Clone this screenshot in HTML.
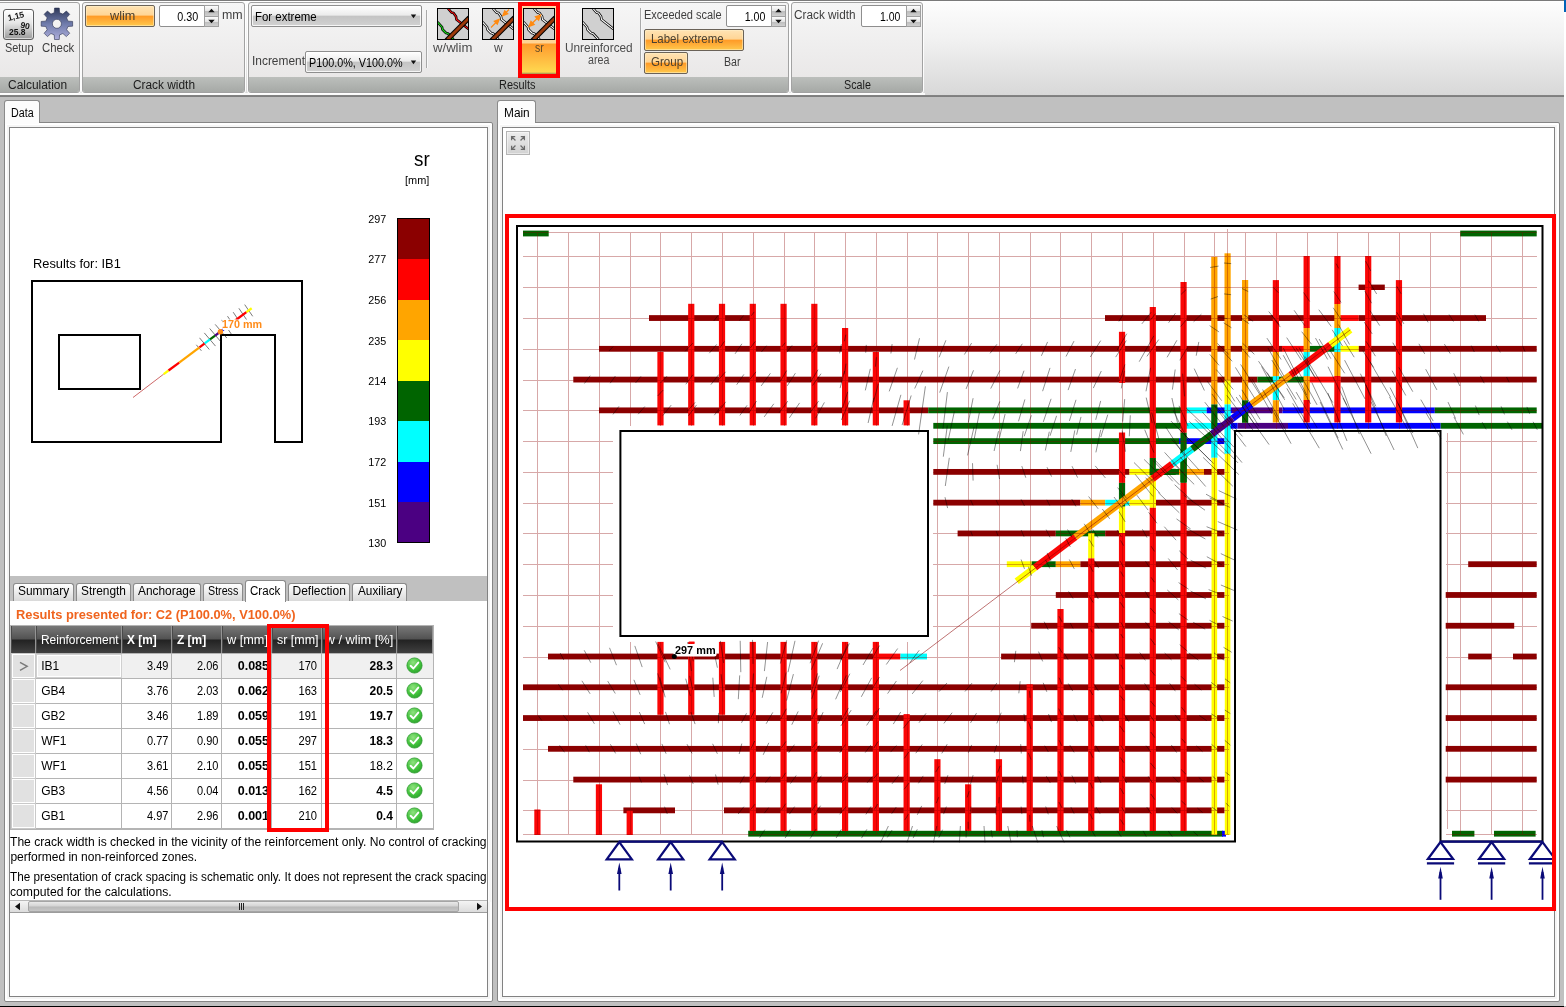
<!DOCTYPE html>
<html lang="en"><head><meta charset="utf-8"><title>Crack spacing sr</title>
<style>
html,body{margin:0;padding:0;background:#c0c0c0;}
body{width:1566px;height:1007px;overflow:hidden;font-family:"Liberation Sans",sans-serif;font-size:12px;}
#app{position:relative;width:1566px;height:1007px;overflow:hidden;background:#c0c0c0;will-change:transform;}
#app div{position:absolute;box-sizing:border-box;}
#app svg{position:absolute;overflow:visible;}
.t{position:absolute;white-space:nowrap;line-height:1;}
.grp{border:1px solid #a2a2a2;border-radius:3px;background:linear-gradient(#f6f6f6,#e7e5e5);box-shadow:0 0 0 1px rgba(255,255,255,.9);overflow:hidden;}
.grp .lab{left:0;right:0;bottom:0;height:15px;background:linear-gradient(#bcbfbc,#a6a9a6);}
.obtn{border:1px solid #6a6258;border-radius:2px;background:linear-gradient(#ffe3b4 0,#ffd595 46%,#ff9a26 50%,#ffb03a 75%,#ffc94c 100%);box-shadow:inset 0 0 0 1px rgba(255,240,200,.55);}
.combo{border:1px solid #8e8e8e;border-radius:2px;background:linear-gradient(#ffffff 0,#ececec 45%,#c4c4c4 52%,#d2d2d2 100%);box-shadow:inset 0 0 0 1px rgba(255,255,255,.8);}
.spin{border:1px solid #8e8e8e;border-radius:2px;background:#fff;}
.spb{border:1px solid #a0a0a0;background:linear-gradient(#fdfdfd 0,#e4e4e4 50%,#bdbdbd 55%,#cfcfcf 100%);}
.pane{border:1px solid #858585;background:#fff;border-radius:2px;}
.inner{border:1px solid #828282;background:#fff;}
.tab{border:1px solid #8a8a8a;border-bottom:none;border-radius:3px 3px 0 0;background:linear-gradient(#ffffff,#d9d9d9);}
.hc{background:linear-gradient(#787878 0,#525252 48%,#222222 52%,#404040 100%);border-right:1px solid #949494;border-left:1px solid #4a4a4a;}
.rh{background:#e1e1e1;border:1px solid #fff;box-shadow:0 0 0 1px #c9c9c9;}

</style></head>
<body>
<div id="app">
<div style="left:0px;top:0px;width:1566px;height:97px;background:linear-gradient(#fdfdfd 2px,#f1f1f1 40px,#d8d8d8 95px);"></div>
<div style="left:0px;top:0px;width:1566px;height:1px;background:#7a7a7a;"></div>
<div style="left:0px;top:1px;width:1566px;height:1px;background:#ffffff;"></div>
<div style="left:0px;top:95px;width:1566px;height:2px;background:linear-gradient(#858585,#7c7c7c);"></div>
<div style="left:0px;top:93px;width:925px;height:2px;background:#fbfbfb;"></div>
<div style="left:1564px;top:0px;width:2px;height:1006px;background:#fff;"></div>
<div style="left:1564px;top:0px;width:2px;height:12px;background:#0063b7;"></div>
<div class="grp" style="left:-3px;top:2px;width:83px;height:91px;"><div class="lab"></div></div>
<div class="grp" style="left:82px;top:2px;width:163px;height:91px;"><div class="lab"></div></div>
<div class="grp" style="left:248px;top:2px;width:540.5px;height:91px;"><div class="lab"></div></div>
<div class="grp" style="left:791px;top:2px;width:132px;height:91px;"><div class="lab"></div></div>
<span class="t" id="t0" style="top:79.00px;font-size:12px;color:#1c1c1c;left:8.40px;transform-origin:0 50%;transform:scaleX(0.9954);">Calculation</span>
<span class="t" id="t1" style="top:79.00px;font-size:12px;color:#1c1c1c;left:132.50px;transform-origin:0 50%;transform:scaleX(0.9890);">Crack width</span>
<span class="t" id="t2" style="top:79.00px;font-size:12px;color:#1c1c1c;left:499.40px;transform-origin:0 50%;transform:scaleX(0.9121);">Results</span>
<span class="t" id="t3" style="top:79.00px;font-size:12px;color:#1c1c1c;left:844.30px;transform-origin:0 50%;transform:scaleX(0.8957);">Scale</span>
<div style="left:3px;top:9px;width:31px;height:31px;border:1px solid #5e5e5e;border-radius:3px;background:linear-gradient(#ffffff,#e6e6e6 45%,#9a9a9a);box-shadow:inset 0 0 0 1px rgba(255,255,255,.6);"></div>
<svg style="left:3px;top:9px" width="31" height="31" viewBox="0 0 31 31" font-family="Liberation Sans, sans-serif" font-weight="700" fill="#101010"><text x="5.5" y="12" font-size="8.5" transform="rotate(-14 5.5 12)">1,15</text><text x="17" y="18.5" font-size="8.5" transform="rotate(12 17 18.5)">90</text><text x="6" y="26.3" font-size="8.5">25.8</text></svg>
<span class="t" id="t4" style="top:42.00px;font-size:12px;color:#3e3e3e;left:4.50px;transform-origin:0 50%;transform:scaleX(0.9088);">Setup</span>
<svg style="left:40px;top:7px" width="34" height="34" viewBox="0 0 34 34"><defs><linearGradient id="gg" x1="0" y1="0" x2="0" y2="1"><stop offset="0" stop-color="#2e3858"/><stop offset=".5" stop-color="#6f7bab"/><stop offset="1" stop-color="#aeaedb"/></linearGradient></defs><path d="M14.24 5.71 L14.54 1.08 L19.26 1.08 L19.56 5.71 L22.86 7.08 L26.35 4.01 L29.69 7.35 L26.62 10.84 L27.99 14.14 L32.62 14.44 L32.62 19.16 L27.99 19.46 L26.62 22.76 L29.69 26.25 L26.35 29.59 L22.86 26.52 L19.56 27.89 L19.26 32.52 L14.54 32.52 L14.24 27.89 L10.94 26.52 L7.45 29.59 L4.11 26.25 L7.18 22.76 L5.81 19.46 L1.18 19.16 L1.18 14.44 L5.81 14.14 L7.18 10.84 L4.11 7.35 L7.45 4.01 L10.94 7.08 Z M21.4 16.8 a4.5 4.5 0 1 0 -9 0 a4.5 4.5 0 1 0 9 0 Z" fill="url(#gg)" fill-rule="evenodd" stroke="#2a3150" stroke-width=".6" stroke-linejoin="round"/></svg>
<span class="t" id="t5" style="top:42.00px;font-size:12px;color:#3e3e3e;left:41.70px;transform-origin:0 50%;transform:scaleX(0.9496);">Check</span>
<div class="obtn" style="left:85px;top:5px;width:70px;height:22px;"></div>
<span class="t" id="t6" style="top:10.00px;font-size:12px;color:#4a4030;left:109.50px;transform-origin:0 50%;transform:scaleX(1.0542);">wlim</span>
<div class="spin" style="left:159px;top:5px;width:60px;height:22px;"></div><div class="spb" style="left:204px;top:5px;width:15px;height:11.5px;"></div><div class="spb" style="left:204px;top:15.5px;width:15px;height:11.5px;"></div><svg style="left:0;top:0" width="1" height="1"><path d="M208.3 12.3 l3.2 -3.6 l3.2 3.6 Z M208.3 19.7 l3.2 3.6 l3.2 -3.6 Z" fill="#111"/></svg><span class="t" id="t7" style="top:11.00px;font-size:12px;color:#000;right:1368.00px;transform-origin:100% 50%;transform:scaleX(0.8990);">0.30</span>
<span class="t" id="t8" style="top:9.00px;font-size:12px;color:#3e3e3e;left:221.50px;transform-origin:0 50%;transform:scaleX(1.0350);">mm</span>
<div class="combo" style="left:251px;top:5px;width:171px;height:22px;"></div><svg style="left:0;top:0" width="1" height="1"><path d="M410.8 14.6 h5.4 l-2.7 3.6 Z" fill="#111"/></svg><span class="t" id="t9" style="top:11.00px;font-size:12px;color:#000;left:255.30px;transform-origin:0 50%;transform:scaleX(0.9538);">For extreme</span>
<span class="t" id="t10" style="top:55.00px;font-size:12px;color:#3e3e3e;left:251.50px;transform-origin:0 50%;transform:scaleX(0.9933);">Increment</span>
<div class="combo" style="left:305px;top:51px;width:117px;height:22px;"></div><svg style="left:0;top:0" width="1" height="1"><path d="M410.8 60.6 h5.4 l-2.7 3.6 Z" fill="#111"/></svg><span class="t" id="t11" style="top:57.00px;font-size:12px;color:#000;left:309.30px;transform-origin:0 50%;transform:scaleX(0.8984);">P100.0%, V100.0%</span>
<div style="left:426px;top:10px;width:1px;height:58px;background:#a9a9a9;"></div>
<div style="left:427px;top:10px;width:1px;height:58px;background:#f8f8f8;"></div>
<div style="left:518px;top:2px;width:42px;height:76px;background:#ff0000;"></div>
<div style="left:522px;top:6px;width:34px;height:68px;background:linear-gradient(#ffdba6 0,#ffd393 37px,#ff9a2c 38px,#ffb940 52px,#ffd84f 66px,#a08c50 68px);"></div>
<svg style="left:437px;top:8px" width="32" height="32" viewBox="0 0 32 32"><defs><clipPath id="ic437"><rect x="1" y="1" width="30" height="30"/></clipPath></defs><rect x=".5" y=".5" width="31" height="31" fill="#d0d0d0" stroke="#000" stroke-width="1"/><g clip-path="url(#ic437)"><path d="M11 .5 L14.5 4.5 L16.5 5 L19 8.5 L19.5 11.5 L22 13.5 L31.5 21" stroke="#000" stroke-width="2.6" fill="none" stroke-linejoin="round"/><path d="M11 .5 L14.5 4.5 L16.5 5 L19 8.5 L19.5 11.5 L22 13.5 L31.5 21" stroke="#ff1010" stroke-width="1.1" fill="none" stroke-linejoin="round"/><path d="M.5 14 L5 19 L5.5 21.5 L9 25 L11 25.5 L16.5 31.5" stroke="#000" stroke-width="2.6" fill="none" stroke-linejoin="round"/><path d="M.5 14 L5 19 L5.5 21.5 L9 25 L11 25.5 L16.5 31.5" stroke="#18e018" stroke-width="1.1" fill="none" stroke-linejoin="round"/><path d="M8.5 31.5 L31.5 8.5 M12.5 31.5 L31.5 12.5" stroke="#000" stroke-width="2.2" fill="none"/><path d="M10.5 31.5 L31.5 10.5" stroke="#9c3a0c" stroke-width="3" fill="none"/></g></svg>
<svg style="left:482px;top:8px" width="32" height="32" viewBox="0 0 32 32"><defs><clipPath id="ic482"><rect x="1" y="1" width="30" height="30"/></clipPath></defs><rect x=".5" y=".5" width="31" height="31" fill="#d0d0d0" stroke="#000" stroke-width="1"/><g clip-path="url(#ic482)"><path d="M11 .5 L14.5 4.5 L16.5 5 L19 8.5 L19.5 11.5 L22 13.5 L31.5 21" stroke="#000" stroke-width="2.6" fill="none" stroke-linejoin="round"/><path d="M11 .5 L14.5 4.5 L16.5 5 L19 8.5 L19.5 11.5 L22 13.5 L31.5 21" stroke="#fff" stroke-width="1.1" fill="none" stroke-linejoin="round"/><path d="M.5 14 L5 19 L5.5 21.5 L9 25 L11 25.5 L16.5 31.5" stroke="#000" stroke-width="2.6" fill="none" stroke-linejoin="round"/><path d="M.5 14 L5 19 L5.5 21.5 L9 25 L11 25.5 L16.5 31.5" stroke="#fff" stroke-width="1.1" fill="none" stroke-linejoin="round"/><path d="M9 19.5 L14 14.5 M27 1.5 L22 6.5" stroke="#ff8a10" stroke-width="1.1"/><path d="M18.3 10.2 L11.2 13 L15.5 17.3 Z M19.7 8.8 L26.8 6 L22.5 1.7 Z" fill="#ff8a10"/><path d="M8.5 31.5 L31.5 8.5 M12.5 31.5 L31.5 12.5" stroke="#000" stroke-width="2.2" fill="none"/><path d="M10.5 31.5 L31.5 10.5" stroke="#9c3a0c" stroke-width="3" fill="none"/></g></svg>
<svg style="left:523px;top:8px" width="32" height="32" viewBox="0 0 32 32"><defs><clipPath id="ic523"><rect x="1" y="1" width="30" height="30"/></clipPath></defs><rect x=".5" y=".5" width="31" height="31" fill="#d0d0d0" stroke="#000" stroke-width="1"/><g clip-path="url(#ic523)"><path d="M11 .5 L14.5 4.5 L16.5 5 L19 8.5 L19.5 11.5 L22 13.5 L31.5 21" stroke="#000" stroke-width="2.6" fill="none" stroke-linejoin="round"/><path d="M11 .5 L14.5 4.5 L16.5 5 L19 8.5 L19.5 11.5 L22 13.5 L31.5 21" stroke="#fff" stroke-width="1.1" fill="none" stroke-linejoin="round"/><path d="M.5 14 L5 19 L5.5 21.5 L9 25 L11 25.5 L16.5 31.5" stroke="#000" stroke-width="2.6" fill="none" stroke-linejoin="round"/><path d="M.5 14 L5 19 L5.5 21.5 L9 25 L11 25.5 L16.5 31.5" stroke="#fff" stroke-width="1.1" fill="none" stroke-linejoin="round"/><path d="M7 17.5 L16.5 8" stroke="#ff8a10" stroke-width="1.3"/><path d="M5 19.5 L12.3 16.8 L7.7 12.2 Z M18.6 5.9 L11.3 8.6 L15.9 13.2 Z" fill="#ff8a10"/><path d="M8.5 31.5 L31.5 8.5 M12.5 31.5 L31.5 12.5" stroke="#000" stroke-width="2.2" fill="none"/><path d="M10.5 31.5 L31.5 10.5" stroke="#9c3a0c" stroke-width="3" fill="none"/></g></svg>
<svg style="left:582px;top:8px" width="32" height="32" viewBox="0 0 32 32"><defs><clipPath id="ic582"><rect x="1" y="1" width="30" height="30"/></clipPath></defs><rect x=".5" y=".5" width="31" height="31" fill="#d0d0d0" stroke="#000" stroke-width="1"/><g clip-path="url(#ic582)"><path d="M11 .5 L14.5 4.5 L16.5 5 L19 8.5 L19.5 11.5 L22 13.5 L31.5 21" stroke="#000" stroke-width="2.6" fill="none" stroke-linejoin="round"/><path d="M11 .5 L14.5 4.5 L16.5 5 L19 8.5 L19.5 11.5 L22 13.5 L31.5 21" stroke="#fff" stroke-width="1.1" fill="none" stroke-linejoin="round"/><path d="M.5 14 L5 19 L5.5 21.5 L9 25 L11 25.5 L16.5 31.5" stroke="#000" stroke-width="2.6" fill="none" stroke-linejoin="round"/><path d="M.5 14 L5 19 L5.5 21.5 L9 25 L11 25.5 L16.5 31.5" stroke="#fff" stroke-width="1.1" fill="none" stroke-linejoin="round"/></g></svg>
<span class="t" id="t12" style="top:42.00px;font-size:12px;color:#4c4c4c;left:433.30px;transform-origin:0 50%;transform:scaleX(1.0944);">w/wlim</span>
<span class="t" id="t13" style="top:42.00px;font-size:12px;color:#4c4c4c;left:494.20px;transform-origin:0 50%;transform:scaleX(1.0032);">w</span>
<span class="t" id="t14" style="top:42.00px;font-size:12px;color:#5a4628;left:535.20px;transform-origin:0 50%;transform:scaleX(0.8700);">sr</span>
<span class="t" id="t15" style="top:42.00px;font-size:12px;color:#4c4c4c;left:564.70px;transform-origin:0 50%;transform:scaleX(0.9854);">Unreinforced</span>
<span class="t" id="t16" style="top:54.00px;font-size:12px;color:#4c4c4c;left:588.30px;transform-origin:0 50%;transform:scaleX(0.8905);">area</span>
<div style="left:640px;top:8px;width:1px;height:60px;background:#a9a9a9;"></div>
<div style="left:641px;top:8px;width:1px;height:60px;background:#f8f8f8;"></div>
<span class="t" id="t17" style="top:9.00px;font-size:12px;color:#3e3e3e;left:644.30px;transform-origin:0 50%;transform:scaleX(0.9170);">Exceeded scale</span>
<div class="spin" style="left:726px;top:5px;width:60px;height:22px;"></div><div class="spb" style="left:771px;top:5px;width:15px;height:11.5px;"></div><div class="spb" style="left:771px;top:15.5px;width:15px;height:11.5px;"></div><svg style="left:0;top:0" width="1" height="1"><path d="M775.3 12.3 l3.2 -3.6 l3.2 3.6 Z M775.3 19.7 l3.2 3.6 l3.2 -3.6 Z" fill="#111"/></svg><span class="t" id="t18" style="top:11.00px;font-size:12px;color:#000;right:800.80px;transform-origin:100% 50%;transform:scaleX(0.8862);">1.00</span>
<div class="obtn" style="left:644px;top:28.5px;width:99.5px;height:22px;"></div>
<span class="t" id="t19" style="top:33.00px;font-size:12px;color:#4a4030;left:651.40px;transform-origin:0 50%;transform:scaleX(0.9547);">Label extreme</span>
<div class="obtn" style="left:644px;top:52px;width:43.5px;height:22px;"></div>
<span class="t" id="t20" style="top:56.00px;font-size:12px;color:#4a4030;left:651.40px;transform-origin:0 50%;transform:scaleX(0.9622);">Group</span>
<span class="t" id="t21" style="top:56.00px;font-size:12px;color:#3e3e3e;left:723.50px;transform-origin:0 50%;transform:scaleX(0.8829);">Bar</span>
<span class="t" id="t22" style="top:9.00px;font-size:12px;color:#3e3e3e;left:794.40px;transform-origin:0 50%;transform:scaleX(0.9827);">Crack width</span>
<div class="spin" style="left:861px;top:5px;width:60px;height:22px;"></div><div class="spb" style="left:906px;top:5px;width:15px;height:11.5px;"></div><div class="spb" style="left:906px;top:15.5px;width:15px;height:11.5px;"></div><svg style="left:0;top:0" width="1" height="1"><path d="M910.3 12.3 l3.2 -3.6 l3.2 3.6 Z M910.3 19.7 l3.2 3.6 l3.2 -3.6 Z" fill="#111"/></svg><span class="t" id="t23" style="top:11.00px;font-size:12px;color:#000;right:665.70px;transform-origin:100% 50%;transform:scaleX(0.8733);">1.00</span>
<div class="tab" style="left:4px;top:100px;width:36px;height:24px;background:#fcfcfc;border-bottom:none;"></div>
<div class="pane" style="left:4px;top:122px;width:489px;height:880px;"></div>
<div style="left:5px;top:121px;width:34px;height:3px;background:#fcfcfc;"></div>
<span class="t" id="t24" style="top:107.00px;font-size:12px;color:#000;left:10.70px;transform-origin:0 50%;transform:scaleX(0.8912);">Data</span>
<div style="left:7px;top:125px;width:483px;height:874px;background:#f5f5f5;"></div>
<div class="inner" style="left:9px;top:127px;width:479px;height:870px;"></div>
<div style="left:10px;top:576px;width:477px;height:25px;background:#c0c0c0;"></div>
<div class="tab" style="left:13px;top:583px;width:61.2px;height:18px;"></div>
<span class="t" id="t25" style="top:585.00px;font-size:12px;color:#000;left:17.80px;transform-origin:0 50%;transform:scaleX(0.9953);">Summary</span>
<div class="tab" style="left:76px;top:583px;width:55.2px;height:18px;"></div>
<span class="t" id="t26" style="top:585.00px;font-size:12px;color:#000;left:81.20px;transform-origin:0 50%;transform:scaleX(0.9917);">Strength</span>
<div class="tab" style="left:133px;top:583px;width:68px;height:18px;"></div>
<span class="t" id="t27" style="top:585.00px;font-size:12px;color:#000;left:138.30px;transform-origin:0 50%;transform:scaleX(0.9906);">Anchorage</span>
<div class="tab" style="left:203px;top:583px;width:40px;height:18px;"></div>
<span class="t" id="t28" style="top:585.00px;font-size:12px;color:#000;left:208.00px;transform-origin:0 50%;transform:scaleX(0.8908);">Stress</span>
<div class="tab" style="left:245px;top:580px;width:40.8px;height:22px;background:#fff;"></div>
<span class="t" id="t29" style="top:585.00px;font-size:12px;color:#000;left:250.30px;transform-origin:0 50%;transform:scaleX(0.9635);">Crack</span>
<div class="tab" style="left:287.7px;top:583px;width:62.6px;height:18px;"></div>
<span class="t" id="t30" style="top:585.00px;font-size:12px;color:#000;left:292.50px;transform-origin:0 50%;">Deflection</span>
<div class="tab" style="left:352.3px;top:583px;width:55px;height:18px;"></div>
<span class="t" id="t31" style="top:585.00px;font-size:12px;color:#000;left:358.30px;transform-origin:0 50%;transform:scaleX(0.9811);">Auxiliary</span>
<span class="t" id="t32" style="top:150.00px;font-size:19.5px;color:#000;left:414.00px;transform-origin:0 50%;transform:scaleX(0.9662);">sr</span>
<span class="t" id="t33" style="top:175.00px;font-size:11px;color:#000;left:404.80px;transform-origin:0 50%;transform:scaleX(0.9937);">[mm]</span>
<svg style="left:0;top:0" width="500" height="600" viewBox="0 0 500 600" shape-rendering="crispEdges"><rect x="397.5" y="218.50" width="32" height="41.00" fill="#8b0000"/><rect x="397.5" y="259.00" width="32" height="41.00" fill="#ff0000"/><rect x="397.5" y="299.50" width="32" height="41.00" fill="#ffa500"/><rect x="397.5" y="340.00" width="32" height="41.00" fill="#ffff00"/><rect x="397.5" y="380.50" width="32" height="41.00" fill="#006400"/><rect x="397.5" y="421.00" width="32" height="41.00" fill="#00ffff"/><rect x="397.5" y="461.50" width="32" height="41.00" fill="#0000ff"/><rect x="397.5" y="502.00" width="32" height="41.00" fill="#4b0082"/><rect x="397.5" y="218.5" width="32" height="324" fill="none" stroke="#000" stroke-width="1"/></svg>
<span class="t" id="t34" style="top:214.00px;font-size:11px;color:#000;right:1179.40px;transform-origin:100% 50%;transform:scaleX(0.9804);">297</span>
<span class="t" id="t35" style="top:254.00px;font-size:11px;color:#000;right:1179.40px;transform-origin:100% 50%;transform:scaleX(0.9804);">277</span>
<span class="t" id="t36" style="top:295.00px;font-size:11px;color:#000;right:1179.40px;transform-origin:100% 50%;transform:scaleX(0.9804);">256</span>
<span class="t" id="t37" style="top:336.00px;font-size:11px;color:#000;right:1179.40px;transform-origin:100% 50%;transform:scaleX(0.9804);">235</span>
<span class="t" id="t38" style="top:376.00px;font-size:11px;color:#000;right:1179.40px;transform-origin:100% 50%;transform:scaleX(0.9804);">214</span>
<span class="t" id="t39" style="top:416.00px;font-size:11px;color:#000;right:1179.40px;transform-origin:100% 50%;transform:scaleX(0.9804);">193</span>
<span class="t" id="t40" style="top:457.00px;font-size:11px;color:#000;right:1179.40px;transform-origin:100% 50%;transform:scaleX(0.9804);">172</span>
<span class="t" id="t41" style="top:498.00px;font-size:11px;color:#000;right:1179.40px;transform-origin:100% 50%;transform:scaleX(0.9804);">151</span>
<span class="t" id="t42" style="top:538.00px;font-size:11px;color:#000;right:1179.40px;transform-origin:100% 50%;transform:scaleX(0.9804);">130</span>
<span class="t" id="t43" style="top:257.00px;font-size:13px;color:#000;left:32.60px;transform-origin:0 50%;transform:scaleX(0.9879);">Results for: IB1</span>
<svg style="left:0;top:0" width="500" height="600" viewBox="0 0 500 600"><path d="M32.0 281.0 L302.0 281.0 L302.0 442.0 L275.0 442.0 L275.0 335.0 L221.0 335.0 L221.0 442.0 L32.0 442.0 Z" fill="none" stroke="#000" stroke-width="2" stroke-linejoin="miter"/><rect x="59.0" y="335.0" width="81.0" height="54.0" fill="none" stroke="#000" stroke-width="2"/><line x1="201.4" y1="350.8" x2="196.3" y2="344.8" stroke="#111" stroke-width=".7" opacity=".8"/><line x1="209.3" y1="349.5" x2="199.5" y2="337.8" stroke="#111" stroke-width=".7" opacity=".8"/><line x1="215.5" y1="346.1" x2="204.3" y2="332.9" stroke="#111" stroke-width=".7" opacity=".8"/><line x1="221.2" y1="342.2" x2="209.7" y2="328.5" stroke="#111" stroke-width=".7" opacity=".8"/><line x1="226.8" y1="338.0" x2="215.2" y2="324.4" stroke="#111" stroke-width=".7" opacity=".8"/><line x1="231.4" y1="334.2" x2="221.7" y2="319.9" stroke="#111" stroke-width=".7" opacity=".8"/><line x1="236.6" y1="329.6" x2="227.5" y2="316.2" stroke="#111" stroke-width=".7" opacity=".8"/><line x1="242.0" y1="325.3" x2="233.2" y2="312.2" stroke="#111" stroke-width=".7" opacity=".8"/><line x1="247.4" y1="320.9" x2="238.9" y2="308.3" stroke="#111" stroke-width=".7" opacity=".8"/><line x1="252.7" y1="316.3" x2="244.7" y2="304.6" stroke="#111" stroke-width=".7" opacity=".8"/><line x1="133.0" y1="397.5" x2="163.7" y2="374.1" stroke="#c04040" stroke-width=".8"/><line x1="163.7" y1="374.1" x2="168.5" y2="370.5" stroke="#ffff00" stroke-width="2.3"/><line x1="168.5" y1="370.5" x2="179.2" y2="362.6" stroke="#ff0000" stroke-width="2.3"/><line x1="179.2" y1="362.6" x2="199.5" y2="347.3" stroke="#ffa500" stroke-width="2.3"/><line x1="199.5" y1="347.3" x2="204.7" y2="343.4" stroke="#ff0000" stroke-width="2.3"/><line x1="204.7" y1="343.4" x2="210.0" y2="339.4" stroke="#00ffff" stroke-width="2.3"/><line x1="210.0" y1="339.4" x2="215.1" y2="335.6" stroke="#006400" stroke-width="2.3"/><line x1="215.1" y1="335.6" x2="220.6" y2="331.5" stroke="#4b0082" stroke-width="2.3"/><line x1="220.6" y1="331.5" x2="225.6" y2="327.8" stroke="#0000ff" stroke-width="2.3"/><line x1="225.6" y1="327.8" x2="235.9" y2="320.0" stroke="#ffa500" stroke-width="2.3"/><line x1="235.9" y1="320.0" x2="246.4" y2="312.1" stroke="#ff0000" stroke-width="2.3"/><line x1="246.4" y1="312.1" x2="251.7" y2="308.2" stroke="#ffff00" stroke-width="2.3"/><rect x="222.5" y="319.5" width="40" height="10.5" fill="#fff"/><circle cx="220.4" cy="331.8" r="2.7" fill="#ff8c1a"/></svg>
<span class="t" id="t44" style="top:319.00px;font-size:11px;color:#ff8c1a;font-weight:700;left:221.80px;transform-origin:0 50%;transform:scaleX(0.9809);">170 mm</span>
<span class="t" id="t45" style="top:609.00px;font-size:12px;color:#f0641e;font-weight:700;left:15.80px;transform-origin:0 50%;transform:scaleX(1.0691);">Results presented for: C2 (P100.0%, V100.0%)</span>
<div style="left:10px;top:625px;width:424px;height:205px;background:#b4b4b4;"></div>
<div style="left:10.5px;top:625.5px;width:422.5px;height:27.5px;background:#1e1e1e;"></div>
<div class="hc" style="left:10.5px;top:625.5px;width:25px;height:27.5px;"></div>
<div class="hc" style="left:35.5px;top:625.5px;width:86px;height:27.5px;"></div>
<div class="hc" style="left:121.5px;top:625.5px;width:50px;height:27.5px;"></div>
<div class="hc" style="left:171.5px;top:625.5px;width:50px;height:27.5px;"></div>
<div class="hc" style="left:221.5px;top:625.5px;width:50px;height:27.5px;"></div>
<div class="hc" style="left:271.5px;top:625.5px;width:50px;height:27.5px;"></div>
<div class="hc" style="left:321.5px;top:625.5px;width:75px;height:27.5px;"></div>
<div class="hc" style="left:396.5px;top:625.5px;width:36.5px;height:27.5px;"></div>
<div class="rh" style="left:11.5px;top:654px;width:23px;height:23.5px;"></div>
<div style="left:36px;top:653.5px;width:85px;height:24px;background:#f0f0f0;"></div>
<div style="left:122px;top:653.5px;width:49px;height:24px;background:#f0f0f0;"></div>
<div style="left:172px;top:653.5px;width:49px;height:24px;background:#f0f0f0;"></div>
<div style="left:222px;top:653.5px;width:49px;height:24px;background:#f0f0f0;"></div>
<div style="left:272px;top:653.5px;width:49px;height:24px;background:#f0f0f0;"></div>
<div style="left:322px;top:653.5px;width:74px;height:24px;background:#f0f0f0;"></div>
<div style="left:397px;top:653.5px;width:35.5px;height:24px;background:#f0f0f0;"></div>
<div class="rh" style="left:11.5px;top:679px;width:23px;height:23.5px;"></div>
<div style="left:36px;top:678.5px;width:85px;height:24px;background:#ffffff;"></div>
<div style="left:122px;top:678.5px;width:49px;height:24px;background:#ffffff;"></div>
<div style="left:172px;top:678.5px;width:49px;height:24px;background:#ffffff;"></div>
<div style="left:222px;top:678.5px;width:49px;height:24px;background:#ffffff;"></div>
<div style="left:272px;top:678.5px;width:49px;height:24px;background:#ffffff;"></div>
<div style="left:322px;top:678.5px;width:74px;height:24px;background:#ffffff;"></div>
<div style="left:397px;top:678.5px;width:35.5px;height:24px;background:#ffffff;"></div>
<div class="rh" style="left:11.5px;top:704px;width:23px;height:23.5px;"></div>
<div style="left:36px;top:703.5px;width:85px;height:24px;background:#ffffff;"></div>
<div style="left:122px;top:703.5px;width:49px;height:24px;background:#ffffff;"></div>
<div style="left:172px;top:703.5px;width:49px;height:24px;background:#ffffff;"></div>
<div style="left:222px;top:703.5px;width:49px;height:24px;background:#ffffff;"></div>
<div style="left:272px;top:703.5px;width:49px;height:24px;background:#ffffff;"></div>
<div style="left:322px;top:703.5px;width:74px;height:24px;background:#ffffff;"></div>
<div style="left:397px;top:703.5px;width:35.5px;height:24px;background:#ffffff;"></div>
<div class="rh" style="left:11.5px;top:729px;width:23px;height:23.5px;"></div>
<div style="left:36px;top:728.5px;width:85px;height:24px;background:#ffffff;"></div>
<div style="left:122px;top:728.5px;width:49px;height:24px;background:#ffffff;"></div>
<div style="left:172px;top:728.5px;width:49px;height:24px;background:#ffffff;"></div>
<div style="left:222px;top:728.5px;width:49px;height:24px;background:#ffffff;"></div>
<div style="left:272px;top:728.5px;width:49px;height:24px;background:#ffffff;"></div>
<div style="left:322px;top:728.5px;width:74px;height:24px;background:#ffffff;"></div>
<div style="left:397px;top:728.5px;width:35.5px;height:24px;background:#ffffff;"></div>
<div class="rh" style="left:11.5px;top:754px;width:23px;height:23.5px;"></div>
<div style="left:36px;top:753.5px;width:85px;height:24px;background:#ffffff;"></div>
<div style="left:122px;top:753.5px;width:49px;height:24px;background:#ffffff;"></div>
<div style="left:172px;top:753.5px;width:49px;height:24px;background:#ffffff;"></div>
<div style="left:222px;top:753.5px;width:49px;height:24px;background:#ffffff;"></div>
<div style="left:272px;top:753.5px;width:49px;height:24px;background:#ffffff;"></div>
<div style="left:322px;top:753.5px;width:74px;height:24px;background:#ffffff;"></div>
<div style="left:397px;top:753.5px;width:35.5px;height:24px;background:#ffffff;"></div>
<div class="rh" style="left:11.5px;top:779px;width:23px;height:23.5px;"></div>
<div style="left:36px;top:778.5px;width:85px;height:24px;background:#ffffff;"></div>
<div style="left:122px;top:778.5px;width:49px;height:24px;background:#ffffff;"></div>
<div style="left:172px;top:778.5px;width:49px;height:24px;background:#ffffff;"></div>
<div style="left:222px;top:778.5px;width:49px;height:24px;background:#ffffff;"></div>
<div style="left:272px;top:778.5px;width:49px;height:24px;background:#ffffff;"></div>
<div style="left:322px;top:778.5px;width:74px;height:24px;background:#ffffff;"></div>
<div style="left:397px;top:778.5px;width:35.5px;height:24px;background:#ffffff;"></div>
<div class="rh" style="left:11.5px;top:804px;width:23px;height:23.5px;"></div>
<div style="left:36px;top:803.5px;width:85px;height:24px;background:#ffffff;"></div>
<div style="left:122px;top:803.5px;width:49px;height:24px;background:#ffffff;"></div>
<div style="left:172px;top:803.5px;width:49px;height:24px;background:#ffffff;"></div>
<div style="left:222px;top:803.5px;width:49px;height:24px;background:#ffffff;"></div>
<div style="left:272px;top:803.5px;width:49px;height:24px;background:#ffffff;"></div>
<div style="left:322px;top:803.5px;width:74px;height:24px;background:#ffffff;"></div>
<div style="left:397px;top:803.5px;width:35.5px;height:24px;background:#ffffff;"></div>
<div style="left:36.5px;top:654.5px;width:84px;height:22px;border:1px solid #fff;box-shadow:0 0 0 1px #d0d0d0;background:#f0f0f0;"></div>
<svg style="left:19px;top:661px" width="10" height="11" viewBox="0 0 10 11"><path d="M1 1.3 L8.2 5.3 L1 9.3" fill="none" stroke="#7a7a7a" stroke-width="1.4"/></svg>
<span class="t" id="t46" style="top:634.00px;font-size:12px;color:#fff;left:41.20px;transform-origin:0 50%;transform:scaleX(0.9943);">Reinforcement</span>
<span class="t" id="t47" style="top:634.00px;font-size:12px;color:#fff;font-weight:700;left:126.80px;transform-origin:0 50%;transform:scaleX(0.9867);">X [m]</span>
<span class="t" id="t48" style="top:634.00px;font-size:12px;color:#fff;font-weight:700;left:176.50px;transform-origin:0 50%;transform:scaleX(0.9956);">Z [m]</span>
<div style="left:222px;top:628px;width:49px;height:22px;overflow:hidden;"><span class="t" style="left:4.5px;top:6px;color:#fff;transform-origin:0 50%;transform:scaleX(1.06)">w [mm]</span></div>
<span class="t" id="t49" style="top:634.00px;font-size:12px;color:#fff;left:277.00px;transform-origin:0 50%;transform:scaleX(1.0400);">sr [mm]</span>
<div style="left:322px;top:628px;width:74px;height:22px;overflow:hidden;"><span class="t" style="right:2.5px;top:6px;color:#fff;transform-origin:100% 50%;transform:scaleX(1.07)">w / wlim [%]</span></div>
<span class="t" id="t50" style="top:660.00px;font-size:12px;color:#000;left:41.20px;transform-origin:0 50%;">IB1</span>
<span class="t" id="t51" style="top:660.00px;font-size:12px;color:#000;right:1397.80px;transform-origin:100% 50%;transform:scaleX(0.9161);">3.49</span>
<span class="t" id="t52" style="top:660.00px;font-size:12px;color:#000;right:1348.00px;transform-origin:100% 50%;transform:scaleX(0.9161);">2.06</span>
<span class="t" id="t53" style="top:660.00px;font-size:12px;color:#000;font-weight:700;right:1297.40px;transform-origin:100% 50%;transform:scaleX(1.0422);">0.085</span>
<span class="t" id="t54" style="top:660.00px;font-size:12px;color:#000;right:1249.10px;transform-origin:100% 50%;transform:scaleX(0.9285);">170</span>
<span class="t" id="t55" style="top:660.00px;font-size:12px;color:#000;font-weight:700;right:1173.20px;transform-origin:100% 50%;">28.3</span>
<svg style="left:406px;top:657px" width="17" height="17" viewBox="0 0 17 17"><defs><radialGradient id="ck0" cx=".4" cy=".3" r=".8"><stop offset="0" stop-color="#8fe27f"/><stop offset=".6" stop-color="#3fc13a"/><stop offset="1" stop-color="#2a9a2c"/></radialGradient></defs><circle cx="8.5" cy="8.5" r="7.6" fill="url(#ck0)" stroke="#2d9a30" stroke-width=".8"/><path d="M4.6 8.8 L7.4 11.5 L12.3 5.6" fill="none" stroke="#fff" stroke-width="1.9" stroke-linecap="round" stroke-linejoin="round"/></svg>
<span class="t" id="t56" style="top:685.00px;font-size:12px;color:#000;left:41.20px;transform-origin:0 50%;">GB4</span>
<span class="t" id="t57" style="top:685.00px;font-size:12px;color:#000;right:1397.80px;transform-origin:100% 50%;transform:scaleX(0.9161);">3.76</span>
<span class="t" id="t58" style="top:685.00px;font-size:12px;color:#000;right:1348.00px;transform-origin:100% 50%;transform:scaleX(0.9161);">2.03</span>
<span class="t" id="t59" style="top:685.00px;font-size:12px;color:#000;font-weight:700;right:1297.40px;transform-origin:100% 50%;transform:scaleX(1.0422);">0.062</span>
<span class="t" id="t60" style="top:685.00px;font-size:12px;color:#000;right:1249.10px;transform-origin:100% 50%;transform:scaleX(0.9285);">163</span>
<span class="t" id="t61" style="top:685.00px;font-size:12px;color:#000;font-weight:700;right:1173.20px;transform-origin:100% 50%;">20.5</span>
<svg style="left:406px;top:682px" width="17" height="17" viewBox="0 0 17 17"><defs><radialGradient id="ck1" cx=".4" cy=".3" r=".8"><stop offset="0" stop-color="#8fe27f"/><stop offset=".6" stop-color="#3fc13a"/><stop offset="1" stop-color="#2a9a2c"/></radialGradient></defs><circle cx="8.5" cy="8.5" r="7.6" fill="url(#ck1)" stroke="#2d9a30" stroke-width=".8"/><path d="M4.6 8.8 L7.4 11.5 L12.3 5.6" fill="none" stroke="#fff" stroke-width="1.9" stroke-linecap="round" stroke-linejoin="round"/></svg>
<span class="t" id="t62" style="top:710.00px;font-size:12px;color:#000;left:41.20px;transform-origin:0 50%;">GB2</span>
<span class="t" id="t63" style="top:710.00px;font-size:12px;color:#000;right:1397.80px;transform-origin:100% 50%;transform:scaleX(0.9161);">3.46</span>
<span class="t" id="t64" style="top:710.00px;font-size:12px;color:#000;right:1348.00px;transform-origin:100% 50%;transform:scaleX(0.9161);">1.89</span>
<span class="t" id="t65" style="top:710.00px;font-size:12px;color:#000;font-weight:700;right:1297.40px;transform-origin:100% 50%;transform:scaleX(1.0422);">0.059</span>
<span class="t" id="t66" style="top:710.00px;font-size:12px;color:#000;right:1249.10px;transform-origin:100% 50%;transform:scaleX(0.9285);">191</span>
<span class="t" id="t67" style="top:710.00px;font-size:12px;color:#000;font-weight:700;right:1173.20px;transform-origin:100% 50%;">19.7</span>
<svg style="left:406px;top:707px" width="17" height="17" viewBox="0 0 17 17"><defs><radialGradient id="ck2" cx=".4" cy=".3" r=".8"><stop offset="0" stop-color="#8fe27f"/><stop offset=".6" stop-color="#3fc13a"/><stop offset="1" stop-color="#2a9a2c"/></radialGradient></defs><circle cx="8.5" cy="8.5" r="7.6" fill="url(#ck2)" stroke="#2d9a30" stroke-width=".8"/><path d="M4.6 8.8 L7.4 11.5 L12.3 5.6" fill="none" stroke="#fff" stroke-width="1.9" stroke-linecap="round" stroke-linejoin="round"/></svg>
<span class="t" id="t68" style="top:735.00px;font-size:12px;color:#000;left:41.20px;transform-origin:0 50%;">WF1</span>
<span class="t" id="t69" style="top:735.00px;font-size:12px;color:#000;right:1397.80px;transform-origin:100% 50%;transform:scaleX(0.9161);">0.77</span>
<span class="t" id="t70" style="top:735.00px;font-size:12px;color:#000;right:1348.00px;transform-origin:100% 50%;transform:scaleX(0.9161);">0.90</span>
<span class="t" id="t71" style="top:735.00px;font-size:12px;color:#000;font-weight:700;right:1297.40px;transform-origin:100% 50%;transform:scaleX(1.0422);">0.055</span>
<span class="t" id="t72" style="top:735.00px;font-size:12px;color:#000;right:1249.10px;transform-origin:100% 50%;transform:scaleX(0.9285);">297</span>
<span class="t" id="t73" style="top:735.00px;font-size:12px;color:#000;font-weight:700;right:1173.20px;transform-origin:100% 50%;">18.3</span>
<svg style="left:406px;top:732px" width="17" height="17" viewBox="0 0 17 17"><defs><radialGradient id="ck3" cx=".4" cy=".3" r=".8"><stop offset="0" stop-color="#8fe27f"/><stop offset=".6" stop-color="#3fc13a"/><stop offset="1" stop-color="#2a9a2c"/></radialGradient></defs><circle cx="8.5" cy="8.5" r="7.6" fill="url(#ck3)" stroke="#2d9a30" stroke-width=".8"/><path d="M4.6 8.8 L7.4 11.5 L12.3 5.6" fill="none" stroke="#fff" stroke-width="1.9" stroke-linecap="round" stroke-linejoin="round"/></svg>
<span class="t" id="t74" style="top:760.00px;font-size:12px;color:#000;left:41.20px;transform-origin:0 50%;">WF1</span>
<span class="t" id="t75" style="top:760.00px;font-size:12px;color:#000;right:1397.80px;transform-origin:100% 50%;transform:scaleX(0.9161);">3.61</span>
<span class="t" id="t76" style="top:760.00px;font-size:12px;color:#000;right:1348.00px;transform-origin:100% 50%;transform:scaleX(0.9161);">2.10</span>
<span class="t" id="t77" style="top:760.00px;font-size:12px;color:#000;font-weight:700;right:1297.40px;transform-origin:100% 50%;transform:scaleX(1.0422);">0.055</span>
<span class="t" id="t78" style="top:760.00px;font-size:12px;color:#000;right:1249.10px;transform-origin:100% 50%;transform:scaleX(0.9285);">151</span>
<span class="t" id="t79" style="top:760.00px;font-size:12px;color:#000;right:1173.20px;transform-origin:100% 50%;">18.2</span>
<svg style="left:406px;top:757px" width="17" height="17" viewBox="0 0 17 17"><defs><radialGradient id="ck4" cx=".4" cy=".3" r=".8"><stop offset="0" stop-color="#8fe27f"/><stop offset=".6" stop-color="#3fc13a"/><stop offset="1" stop-color="#2a9a2c"/></radialGradient></defs><circle cx="8.5" cy="8.5" r="7.6" fill="url(#ck4)" stroke="#2d9a30" stroke-width=".8"/><path d="M4.6 8.8 L7.4 11.5 L12.3 5.6" fill="none" stroke="#fff" stroke-width="1.9" stroke-linecap="round" stroke-linejoin="round"/></svg>
<span class="t" id="t80" style="top:785.00px;font-size:12px;color:#000;left:41.20px;transform-origin:0 50%;">GB3</span>
<span class="t" id="t81" style="top:785.00px;font-size:12px;color:#000;right:1397.80px;transform-origin:100% 50%;transform:scaleX(0.9161);">4.56</span>
<span class="t" id="t82" style="top:785.00px;font-size:12px;color:#000;right:1348.00px;transform-origin:100% 50%;transform:scaleX(0.9161);">0.04</span>
<span class="t" id="t83" style="top:785.00px;font-size:12px;color:#000;font-weight:700;right:1297.40px;transform-origin:100% 50%;transform:scaleX(1.0422);">0.013</span>
<span class="t" id="t84" style="top:785.00px;font-size:12px;color:#000;right:1249.10px;transform-origin:100% 50%;transform:scaleX(0.9285);">162</span>
<span class="t" id="t85" style="top:785.00px;font-size:12px;color:#000;font-weight:700;right:1173.20px;transform-origin:100% 50%;">4.5</span>
<svg style="left:406px;top:782px" width="17" height="17" viewBox="0 0 17 17"><defs><radialGradient id="ck5" cx=".4" cy=".3" r=".8"><stop offset="0" stop-color="#8fe27f"/><stop offset=".6" stop-color="#3fc13a"/><stop offset="1" stop-color="#2a9a2c"/></radialGradient></defs><circle cx="8.5" cy="8.5" r="7.6" fill="url(#ck5)" stroke="#2d9a30" stroke-width=".8"/><path d="M4.6 8.8 L7.4 11.5 L12.3 5.6" fill="none" stroke="#fff" stroke-width="1.9" stroke-linecap="round" stroke-linejoin="round"/></svg>
<span class="t" id="t86" style="top:810.00px;font-size:12px;color:#000;left:41.20px;transform-origin:0 50%;">GB1</span>
<span class="t" id="t87" style="top:810.00px;font-size:12px;color:#000;right:1397.80px;transform-origin:100% 50%;transform:scaleX(0.9161);">4.97</span>
<span class="t" id="t88" style="top:810.00px;font-size:12px;color:#000;right:1348.00px;transform-origin:100% 50%;transform:scaleX(0.9161);">2.96</span>
<span class="t" id="t89" style="top:810.00px;font-size:12px;color:#000;font-weight:700;right:1297.40px;transform-origin:100% 50%;transform:scaleX(1.0422);">0.001</span>
<span class="t" id="t90" style="top:810.00px;font-size:12px;color:#000;right:1249.10px;transform-origin:100% 50%;transform:scaleX(0.9285);">210</span>
<span class="t" id="t91" style="top:810.00px;font-size:12px;color:#000;font-weight:700;right:1173.20px;transform-origin:100% 50%;">0.4</span>
<svg style="left:406px;top:807px" width="17" height="17" viewBox="0 0 17 17"><defs><radialGradient id="ck6" cx=".4" cy=".3" r=".8"><stop offset="0" stop-color="#8fe27f"/><stop offset=".6" stop-color="#3fc13a"/><stop offset="1" stop-color="#2a9a2c"/></radialGradient></defs><circle cx="8.5" cy="8.5" r="7.6" fill="url(#ck6)" stroke="#2d9a30" stroke-width=".8"/><path d="M4.6 8.8 L7.4 11.5 L12.3 5.6" fill="none" stroke="#fff" stroke-width="1.9" stroke-linecap="round" stroke-linejoin="round"/></svg>
<div style="left:267px;top:624px;width:62px;height:207.5px;border:4px solid #ff0000;"></div>
<div style="left:10px;top:832px;width:478px;height:68px;background:#fff;"></div>
<span class="t" id="t92" style="top:836.00px;font-size:12px;color:#000;left:10.40px;transform-origin:0 50%;transform:scaleX(1.0069);">The crack width is checked in the vicinity of the reinforcement only. No control of cracking</span>
<span class="t" id="t93" style="top:851.00px;font-size:12px;color:#000;left:10.40px;transform-origin:0 50%;">performed in non-reinforced zones.</span>
<span class="t" id="t94" style="top:871.00px;font-size:12px;color:#000;left:10.40px;transform-origin:0 50%;transform:scaleX(0.9779);">The presentation of crack spacing is schematic only. It does not represent the crack spacing</span>
<span class="t" id="t95" style="top:886.00px;font-size:12px;color:#000;left:10.40px;transform-origin:0 50%;transform:scaleX(1.0137);">computed for the calculations.</span>
<div style="left:487px;top:830px;width:1px;height:72px;background:#828282;"></div>
<div style="left:488px;top:830px;width:4px;height:72px;background:linear-gradient(90deg,#fff,#f5f5f5,#fff);"></div>
<div style="left:492px;top:830px;width:1px;height:72px;background:#858585;"></div>
<div style="left:493px;top:830px;width:4px;height:72px;background:#c0c0c0;"></div>
<div style="left:10px;top:900px;width:477px;height:13px;background:linear-gradient(#f4f4f4,#dcdcdc);border-top:1px solid #b8b8b8;border-bottom:1px solid #9c9c9c;"></div>
<div style="left:28px;top:901px;width:431px;height:11px;background:linear-gradient(#e9e9e9 0,#d4d4d4 45%,#b9b9b9 55%,#c6c6c6 100%);border:1px solid #a5a5a5;border-radius:2px;"></div>
<svg style="left:0;top:0" width="500" height="920"><path d="M15 906.5 l5 -3.8 v7.6 Z M482 906.5 l-5 -3.8 v7.6 Z" fill="#111"/><path d="M239.5 903v7 M241.5 903v7 M243.5 903v7" stroke="#222" stroke-width="1" shape-rendering="crispEdges"/></svg>
<div class="tab" style="left:497px;top:100px;width:39px;height:24px;background:#fcfcfc;border-bottom:none;"></div>
<div class="pane" style="left:497px;top:122px;width:1063px;height:880px;"></div>
<div style="left:498px;top:121px;width:37px;height:3px;background:#fcfcfc;"></div>
<span class="t" id="t96" style="top:107.00px;font-size:12px;color:#000;left:503.70px;transform-origin:0 50%;transform:scaleX(0.9879);">Main</span>
<div style="left:500px;top:125px;width:1057px;height:874px;background:#f5f5f5;"></div>
<div class="inner" style="left:502px;top:127px;width:1053px;height:870px;"></div>
<div style="left:506px;top:131px;width:24px;height:24px;border:1px solid #b4b4b4;background:linear-gradient(#ededed,#d2d2d2);box-shadow:inset 0 0 0 1px rgba(255,255,255,.45);"></div>
<svg style="left:506px;top:131px" width="24" height="24" viewBox="0 0 24 24"><g stroke="#6a6a6a" stroke-width="1.25" fill="none" stroke-linecap="square"><path d="M5.6 5.6 L9 9 M5.6 8.6 V5.6 H8.6"/><path d="M18.4 5.6 L15 9 M15.4 5.6 H18.4 V8.6"/><path d="M5.6 18.4 L9 15 M5.6 15.4 V18.4 H8.6"/><path d="M18.4 18.4 L15 15 M15.4 18.4 H18.4 V15.4"/></g></svg>
<svg style="left:0;top:0" width="1566" height="1007" viewBox="0 0 1566 1007"><defs><clipPath id="cpm"><rect x="503" y="128" width="1051" height="868"/></clipPath></defs><g clip-path="url(#cpm)"><rect x="523.0" y="230.60" width="25.7" height="5.8" fill="#006400"/><rect x="1460.2" y="230.60" width="76.5" height="5.8" fill="#006400"/><rect x="1358.6" y="284.60" width="26.2" height="5.4" fill="#8b0000"/><rect x="649.0" y="315.14" width="103.6" height="5.8" fill="#8b0000"/><rect x="1105.0" y="315.14" width="235.8" height="5.8" fill="#8b0000"/><rect x="1340.8" y="315.14" width="18.0" height="5.8" fill="#fb0606"/><rect x="1358.8" y="315.14" width="127.2" height="5.8" fill="#8b0000"/><rect x="599.0" y="345.91" width="683.0" height="5.8" fill="#8b0000"/><rect x="1282.0" y="345.91" width="27.6" height="5.8" fill="#fb0606"/><rect x="1309.6" y="345.91" width="27.4" height="5.8" fill="#006400"/><rect x="1337.0" y="345.91" width="21.8" height="5.8" fill="#ffff00"/><rect x="1358.8" y="345.91" width="177.9" height="5.8" fill="#8b0000"/><rect x="573.3" y="376.68" width="684.1" height="5.8" fill="#8b0000"/><rect x="1257.4" y="376.68" width="47.6" height="5.8" fill="#006400"/><rect x="1305.0" y="376.68" width="35.8" height="5.8" fill="#fb0606"/><rect x="1340.8" y="376.68" width="195.9" height="5.8" fill="#8b0000"/><rect x="599.0" y="407.45" width="329.2" height="5.8" fill="#8b0000"/><rect x="928.2" y="407.45" width="258.4" height="5.8" fill="#006400"/><rect x="1186.6" y="407.45" width="20.1" height="5.8" fill="#00ffff"/><rect x="1206.7" y="407.45" width="25.3" height="5.8" fill="#0000ff"/><rect x="1232.0" y="407.45" width="50.5" height="5.8" fill="#4b0082"/><rect x="1282.5" y="407.45" width="152.3" height="5.8" fill="#0000ff"/><rect x="1434.8" y="407.45" width="101.9" height="5.8" fill="#006400"/><rect x="933.3" y="422.90" width="253.3" height="5.8" fill="#006400"/><rect x="1186.6" y="422.90" width="25.2" height="5.8" fill="#00ffff"/><rect x="1211.8" y="422.90" width="25.9" height="5.8" fill="#0000ff"/><rect x="1237.7" y="422.90" width="50.3" height="5.8" fill="#4b0082"/><rect x="1288.0" y="422.90" width="152.7" height="5.8" fill="#0000ff"/><rect x="1440.7" y="422.90" width="101.3" height="5.8" fill="#006400"/><rect x="933.3" y="438.22" width="245.7" height="5.8" fill="#006400"/><rect x="1179.0" y="438.22" width="45.5" height="5.8" fill="#0000ff"/><rect x="933.3" y="468.99" width="196.2" height="5.8" fill="#8b0000"/><rect x="1129.5" y="468.99" width="23.1" height="5.8" fill="#ffff00"/><rect x="1152.6" y="468.99" width="26.4" height="5.8" fill="#006400"/><rect x="1179.0" y="468.99" width="25.0" height="5.8" fill="#ffa500"/><rect x="1204.0" y="468.99" width="20.5" height="5.8" fill="#8b0000"/><rect x="933.3" y="499.76" width="147.1" height="5.8" fill="#8b0000"/><rect x="1080.4" y="499.76" width="24.8" height="5.8" fill="#ffa500"/><rect x="1105.2" y="499.76" width="24.3" height="5.8" fill="#00ffff"/><rect x="1129.5" y="499.76" width="26.3" height="5.8" fill="#ffff00"/><rect x="1155.8" y="499.76" width="68.7" height="5.8" fill="#8b0000"/><rect x="957.6" y="530.53" width="98.2" height="5.8" fill="#8b0000"/><rect x="1055.8" y="530.53" width="49.4" height="5.8" fill="#006400"/><rect x="1105.2" y="530.53" width="119.3" height="5.8" fill="#8b0000"/><rect x="1006.8" y="561.30" width="24.9" height="5.8" fill="#ffff00"/><rect x="1031.7" y="561.30" width="24.1" height="5.8" fill="#006400"/><rect x="1055.8" y="561.30" width="24.6" height="5.8" fill="#ffa500"/><rect x="1080.4" y="561.30" width="144.1" height="5.8" fill="#8b0000"/><rect x="1055.8" y="592.07" width="168.7" height="5.8" fill="#8b0000"/><rect x="1031.2" y="622.84" width="193.3" height="5.8" fill="#8b0000"/><rect x="548.0" y="653.61" width="330.0" height="5.8" fill="#8b0000"/><rect x="878.0" y="653.61" width="22.5" height="5.8" fill="#fb0606"/><rect x="900.5" y="653.61" width="26.5" height="5.8" fill="#00ffff"/><rect x="1001.1" y="653.61" width="223.4" height="5.8" fill="#8b0000"/><rect x="523.0" y="684.38" width="701.5" height="5.8" fill="#8b0000"/><rect x="523.0" y="715.15" width="701.5" height="5.8" fill="#8b0000"/><rect x="548.0" y="745.92" width="676.5" height="5.8" fill="#8b0000"/><rect x="573.3" y="776.69" width="651.2" height="5.8" fill="#8b0000"/><rect x="623.4" y="807.46" width="51.6" height="5.8" fill="#8b0000"/><rect x="724.0" y="807.46" width="500.5" height="5.8" fill="#8b0000"/><rect x="748.2" y="830.80" width="474.8" height="5.8" fill="#006400"/><rect x="1222.0" y="830.80" width="4.0" height="5.8" fill="#0000ff"/><rect x="1468.2" y="561.30" width="68.5" height="5.8" fill="#8b0000"/><rect x="1445.7" y="592.07" width="91.0" height="5.8" fill="#8b0000"/><rect x="1445.7" y="622.84" width="68.5" height="5.8" fill="#8b0000"/><rect x="1468.2" y="653.61" width="23.5" height="5.8" fill="#8b0000"/><rect x="1513.0" y="653.61" width="23.7" height="5.8" fill="#8b0000"/><rect x="1445.7" y="684.38" width="91.0" height="5.8" fill="#8b0000"/><rect x="1445.7" y="715.15" width="91.0" height="5.8" fill="#8b0000"/><rect x="1445.7" y="745.92" width="91.0" height="5.8" fill="#8b0000"/><rect x="1445.7" y="776.69" width="91.0" height="5.8" fill="#8b0000"/><rect x="1452.0" y="830.80" width="22.4" height="5.8" fill="#006400"/><rect x="1494.0" y="830.80" width="41.6" height="5.8" fill="#006400"/><rect x="657.38" y="352.0" width="6.2" height="73.4" fill="#fb0606"/><rect x="688.15" y="303.8" width="6.2" height="121.6" fill="#fb0606"/><rect x="718.92" y="303.8" width="6.2" height="121.6" fill="#fb0606"/><rect x="749.69" y="303.8" width="6.2" height="121.6" fill="#fb0606"/><rect x="780.46" y="303.8" width="6.2" height="121.6" fill="#fb0606"/><rect x="811.23" y="303.8" width="6.2" height="121.6" fill="#fb0606"/><rect x="842.00" y="328.0" width="6.2" height="97.4" fill="#fb0606"/><rect x="872.77" y="352.0" width="6.2" height="73.4" fill="#fb0606"/><rect x="903.54" y="400.3" width="6.2" height="25.1" fill="#fb0606"/><rect x="657.38" y="641.9" width="6.2" height="72.9" fill="#fb0606"/><rect x="688.15" y="641.9" width="6.2" height="72.9" fill="#fb0606"/><rect x="718.92" y="641.9" width="6.2" height="72.9" fill="#fb0606"/><rect x="749.69" y="641.9" width="6.2" height="189.1" fill="#fb0606"/><rect x="780.46" y="641.9" width="6.2" height="189.1" fill="#fb0606"/><rect x="811.23" y="641.9" width="6.2" height="189.1" fill="#fb0606"/><rect x="842.00" y="641.9" width="6.2" height="189.1" fill="#fb0606"/><rect x="872.77" y="641.9" width="6.2" height="189.1" fill="#fb0606"/><rect x="903.54" y="714.1" width="6.2" height="116.9" fill="#fb0606"/><rect x="934.31" y="759.2" width="6.2" height="71.8" fill="#fb0606"/><rect x="965.08" y="784.3" width="6.2" height="46.7" fill="#fb0606"/><rect x="995.85" y="759.2" width="6.2" height="71.8" fill="#fb0606"/><rect x="1026.62" y="684.3" width="6.2" height="146.7" fill="#fb0606"/><rect x="534.30" y="809.5" width="6.2" height="25.5" fill="#fb0606"/><rect x="595.84" y="784.3" width="6.2" height="50.7" fill="#fb0606"/><rect x="626.61" y="810.7" width="6.2" height="24.3" fill="#fb0606"/><rect x="1057.39" y="609.0" width="6.2" height="222.0" fill="#fb0606"/><rect x="1088.16" y="533.0" width="6.2" height="25.4" fill="#ffff00"/><rect x="1088.16" y="558.4" width="6.2" height="272.6" fill="#fb0606"/><rect x="1118.93" y="331.8" width="6.2" height="51.1" fill="#fb0606"/><rect x="1118.93" y="432.5" width="6.2" height="50.4" fill="#fb0606"/><rect x="1118.93" y="482.9" width="6.2" height="23.8" fill="#006400"/><rect x="1118.93" y="506.7" width="6.2" height="26.3" fill="#ffff00"/><rect x="1118.93" y="533.0" width="6.2" height="298.0" fill="#fb0606"/><rect x="1149.70" y="307.0" width="6.2" height="151.0" fill="#fb0606"/><rect x="1149.70" y="458.0" width="6.2" height="17.5" fill="#006400"/><rect x="1149.70" y="475.5" width="6.2" height="32.3" fill="#ffff00"/><rect x="1149.70" y="507.8" width="6.2" height="323.2" fill="#fb0606"/><rect x="1180.47" y="282.0" width="6.2" height="150.8" fill="#fb0606"/><rect x="1180.47" y="432.8" width="6.2" height="50.1" fill="#006400"/><rect x="1180.47" y="482.9" width="6.2" height="348.1" fill="#fb0606"/><rect x="1211.24" y="256.8" width="6.2" height="147.6" fill="#ffa500"/><rect x="1211.24" y="404.4" width="6.2" height="24.6" fill="#006400"/><rect x="1211.24" y="429.0" width="6.2" height="28.8" fill="#00ffff"/><rect x="1211.54" y="457.8" width="5.6" height="377.2" fill="#ffff00"/><rect x="1224.50" y="253.3" width="6.2" height="126.4" fill="#ffa500"/><rect x="1224.50" y="379.7" width="6.2" height="24.7" fill="#ffff00"/><rect x="1224.50" y="404.4" width="6.2" height="49.4" fill="#00ffff"/><rect x="1224.80" y="453.8" width="5.6" height="381.2" fill="#ffff00"/><rect x="1242.01" y="280.0" width="6.2" height="120.3" fill="#ffa500"/><rect x="1242.01" y="400.3" width="6.2" height="22.5" fill="#006400"/><rect x="1272.78" y="280.1" width="6.2" height="71.9" fill="#fb0606"/><rect x="1272.78" y="352.0" width="6.2" height="24.2" fill="#ffa500"/><rect x="1272.78" y="376.2" width="6.2" height="24.0" fill="#00ffff"/><rect x="1272.78" y="400.2" width="6.2" height="22.3" fill="#ffa500"/><rect x="1303.55" y="256.0" width="6.2" height="72.0" fill="#fb0606"/><rect x="1303.55" y="328.0" width="6.2" height="24.0" fill="#ffa500"/><rect x="1303.55" y="352.0" width="6.2" height="24.2" fill="#00ffff"/><rect x="1303.55" y="376.2" width="6.2" height="23.8" fill="#ffa500"/><rect x="1303.55" y="400.0" width="6.2" height="22.5" fill="#fb0606"/><rect x="1334.32" y="256.0" width="6.2" height="48.0" fill="#fb0606"/><rect x="1334.32" y="304.0" width="6.2" height="24.0" fill="#ffa500"/><rect x="1334.32" y="328.0" width="6.2" height="24.0" fill="#00ffff"/><rect x="1334.32" y="352.0" width="6.2" height="24.0" fill="#ffa500"/><rect x="1334.32" y="376.0" width="6.2" height="46.5" fill="#fb0606"/><rect x="1365.09" y="256.0" width="6.2" height="166.5" fill="#fb0606"/><rect x="1395.86" y="280.1" width="6.2" height="142.4" fill="#fb0606"/><rect x="1149.7" y="468.8" width="26" height="6.2" fill="#006400"/><rect x="1180.5" y="452.0" width="6.2" height="30" fill="#006400"/><line x1="1016.7" y1="581.2" x2="1035.0" y2="567.4" stroke="#ffff00" stroke-width="6.9"/><line x1="1035.0" y1="567.4" x2="1075.3" y2="537.0" stroke="#fb0606" stroke-width="6.9"/><line x1="1075.3" y1="537.0" x2="1152.6" y2="478.8" stroke="#ffa500" stroke-width="6.9"/><line x1="1152.6" y1="478.8" x2="1172.2" y2="464.0" stroke="#fb0606" stroke-width="6.9"/><line x1="1172.2" y1="464.0" x2="1192.3" y2="448.9" stroke="#00ffff" stroke-width="6.9"/><line x1="1192.3" y1="448.9" x2="1211.8" y2="434.2" stroke="#006400" stroke-width="6.9"/><line x1="1211.8" y1="434.2" x2="1232.5" y2="418.6" stroke="#4b0082" stroke-width="6.9"/><line x1="1232.5" y1="418.6" x2="1251.4" y2="404.3" stroke="#0000ff" stroke-width="6.9"/><line x1="1251.4" y1="404.3" x2="1290.5" y2="374.9" stroke="#ffa500" stroke-width="6.9"/><line x1="1290.5" y1="374.9" x2="1330.4" y2="344.8" stroke="#fb0606" stroke-width="6.9"/><line x1="1330.4" y1="344.8" x2="1350.3" y2="329.8" stroke="#ffff00" stroke-width="6.9"/><path d="M537.5 232.0 L537.5 835.0 M568.5 232.0 L568.5 835.0 M599.5 232.0 L599.5 835.0 M630.5 232.0 L630.5 426.0 M630.5 642.0 L630.5 835.0 M660.5 232.0 L660.5 426.0 M660.5 642.0 L660.5 835.0 M691.5 232.0 L691.5 426.0 M691.5 642.0 L691.5 835.0 M722.5 232.0 L722.5 426.0 M722.5 642.0 L722.5 835.0 M753.5 232.0 L753.5 426.0 M753.5 642.0 L753.5 835.0 M784.5 232.0 L784.5 426.0 M784.5 642.0 L784.5 835.0 M814.5 232.0 L814.5 426.0 M814.5 642.0 L814.5 835.0 M845.5 232.0 L845.5 426.0 M845.5 642.0 L845.5 835.0 M876.5 232.0 L876.5 426.0 M876.5 642.0 L876.5 835.0 M907.5 232.0 L907.5 426.0 M907.5 642.0 L907.5 835.0 M937.5 232.0 L937.5 835.0 M968.5 232.0 L968.5 835.0 M999.5 232.0 L999.5 835.0 M1030.5 232.0 L1030.5 835.0 M1060.5 232.0 L1060.5 835.0 M1091.5 232.0 L1091.5 835.0 M1122.5 232.0 L1122.5 835.0 M1153.5 232.0 L1153.5 835.0 M1184.5 232.0 L1184.5 835.0 M1214.5 232.0 L1214.5 835.0 M1245.5 232.0 L1245.5 429.0 M1276.5 232.0 L1276.5 429.0 M1307.5 232.0 L1307.5 429.0 M1337.5 232.0 L1337.5 429.0 M1368.5 232.0 L1368.5 429.0 M1399.5 232.0 L1399.5 429.0 M1430.5 232.0 L1430.5 429.0 M1460.5 232.0 L1460.5 835.0 M1491.5 232.0 L1491.5 835.0 M1522.5 232.0 L1522.5 835.0 M1227.5 229.0 L1227.5 835.0 M1447.5 433.0 L1447.5 829.0 M523.0 232.5 L1537.0 232.5 M523.0 256.5 L1537.0 256.5 M523.0 287.5 L1537.0 287.5 M523.0 318.5 L1537.0 318.5 M523.0 349.5 L1537.0 349.5 M523.0 380.5 L1537.0 380.5 M523.0 410.5 L1537.0 410.5 M523.0 441.5 L613.0 441.5 M933.0 441.5 L1229.0 441.5 M1446.0 441.5 L1537.0 441.5 M523.0 472.5 L613.0 472.5 M933.0 472.5 L1229.0 472.5 M1446.0 472.5 L1537.0 472.5 M523.0 503.5 L613.0 503.5 M933.0 503.5 L1229.0 503.5 M1446.0 503.5 L1537.0 503.5 M523.0 533.5 L613.0 533.5 M933.0 533.5 L1229.0 533.5 M1446.0 533.5 L1537.0 533.5 M523.0 564.5 L613.0 564.5 M933.0 564.5 L1229.0 564.5 M1446.0 564.5 L1537.0 564.5 M523.0 595.5 L613.0 595.5 M933.0 595.5 L1229.0 595.5 M1446.0 595.5 L1537.0 595.5 M523.0 626.5 L613.0 626.5 M933.0 626.5 L1229.0 626.5 M1446.0 626.5 L1537.0 626.5 M523.0 657.5 L1229.0 657.5 M1446.0 657.5 L1537.0 657.5 M523.0 687.5 L1229.0 687.5 M1446.0 687.5 L1537.0 687.5 M523.0 718.5 L1229.0 718.5 M1446.0 718.5 L1537.0 718.5 M523.0 749.5 L1229.0 749.5 M1446.0 749.5 L1537.0 749.5 M523.0 780.5 L1229.0 780.5 M1446.0 780.5 L1537.0 780.5 M523.0 810.5 L1229.0 810.5 M1446.0 810.5 L1537.0 810.5 M523.0 834.5 L1229.0 834.5 M1446.0 834.5 L1537.0 834.5" fill="none" stroke="#8b0000" stroke-opacity=".34" stroke-width="1" shape-rendering="crispEdges"/><line x1="900" y1="670.5" x2="1350.3" y2="329.8" stroke="#8b0000" stroke-opacity=".55" stroke-width="1"/><path d="M1368.5 280.6 L1376.7 294.0 M713.8 320.9 L718.2 315.2 M739.5 320.5 L743.5 315.6 M1118.9 321.5 L1123.1 314.6 M1141.9 323.8 L1151.1 312.3 M1168.6 322.7 L1175.4 313.3 M1193.6 321.8 L1201.4 314.2 M1218.3 317.5 L1227.7 318.6 M1243.9 314.8 L1253.1 321.3 M1268.7 311.5 L1279.3 324.6 M1294.1 310.3 L1304.9 325.8 M1318.8 309.7 L1331.2 326.4 M1369.9 310.5 L1379.7 325.6 M1396.7 312.2 L1403.9 323.9 M1423.5 313.7 L1428.1 322.4 M1449.1 314.5 L1453.5 321.6 M1474.9 314.7 L1478.7 321.4 M608.9 351.0 L613.1 346.6 M685.2 351.3 L689.8 346.3 M709.3 353.2 L716.7 344.4 M735.1 353.8 L741.9 343.8 M761.5 351.9 L766.5 345.7 M786.9 352.2 L792.1 345.4 M812.2 352.8 L817.8 344.8 M839.6 353.3 L841.4 344.3 M865.7 352.7 L866.3 344.9 M890.9 353.5 L892.1 344.1 M914.5 359.5 L919.5 338.2 M939.1 357.3 L945.9 340.3 M964.4 354.5 L971.6 343.1 M990.1 353.3 L996.9 344.3 M1015.7 353.8 L1022.3 343.8 M1041.4 355.8 L1047.6 341.9 M1066.0 356.5 L1074.0 341.1 M1090.3 357.0 L1100.7 340.6 M1115.7 357.1 L1126.3 340.5 M1139.2 361.7 L1153.8 335.9 M1167.1 357.3 L1176.9 340.3 M1196.2 355.7 L1198.8 341.9 M1217.3 343.4 L1228.7 354.3 M1242.6 343.3 L1254.4 354.3 M1266.9 338.1 L1281.1 359.5 M1286.7 337.6 L1301.3 360.0 M1315.5 338.1 L1327.7 359.5 M1343.8 340.5 L1354.2 357.2 M1366.1 341.4 L1375.5 356.2 M1392.8 342.7 L1399.8 354.9 M1418.9 343.8 L1424.7 353.9 M1444.4 344.1 L1450.2 353.6 M1471.3 345.6 L1474.3 352.0 M1496.3 345.2 L1500.3 352.4 M1522.6 346.0 L1525.0 351.6 M584.4 383.5 L590.2 375.7 M610.2 383.2 L615.4 376.0 M635.6 382.9 L641.0 376.3 M660.5 383.0 L667.1 376.1 M685.8 384.3 L692.8 374.8 M710.9 384.6 L718.7 374.6 M736.7 384.7 L743.9 374.4 M761.2 385.9 L770.4 373.3 M787.2 385.9 L795.4 373.2 M812.6 385.5 L821.0 373.7 M840.1 388.1 L844.5 371.0 M865.3 390.4 L870.3 368.8 M889.2 391.4 L897.4 367.8 M914.7 388.5 L922.9 370.6 M939.7 392.6 L948.9 366.6 M966.1 388.9 L973.5 370.3 M990.7 388.6 L999.9 370.5 M1017.6 388.4 L1024.0 370.7 M1042.6 391.2 L1050.0 367.9 M1068.1 390.1 L1075.5 369.0 M1093.3 388.1 L1101.3 371.0 M1121.3 388.4 L1124.3 370.8 M1146.0 391.3 L1150.6 367.8 M1172.4 389.6 L1175.2 369.5 M1194.2 368.6 L1204.4 390.5 M1216.3 369.6 L1233.3 389.5 M1240.6 364.4 L1260.0 394.8 M1258.5 361.2 L1284.3 397.9 M1283.2 355.2 L1310.6 403.9 M1305.2 356.6 L1332.8 402.6 M1344.6 360.2 L1365.0 398.9 M1370.0 361.9 L1390.6 397.3 M1398.8 367.4 L1412.8 391.7 M1425.7 369.2 L1436.9 389.9 M1453.7 373.2 L1459.9 386.0 M1480.4 375.9 L1484.2 383.2 M1506.5 377.0 L1509.1 382.2 M613.0 414.4 L619.0 406.3 M638.2 414.2 L644.8 406.5 M662.8 415.6 L671.2 405.1 M688.4 415.8 L696.6 404.9 M714.3 415.2 L721.7 405.5 M739.9 415.4 L747.1 405.3 M764.2 416.9 L773.8 403.8 M789.4 417.8 L799.6 402.9 M815.6 418.3 L824.4 402.4 M841.4 419.9 L849.6 400.8 M868.1 423.0 L873.9 397.7 M892.1 425.9 L900.9 394.8 M918.6 434.4 L925.4 386.3 M943.0 428.6 L947.4 392.1 M968.3 422.5 L973.1 398.2 M992.6 419.3 L999.8 401.4 M1018.5 421.3 L1024.9 399.4 M1043.3 421.9 L1051.1 398.8 M1069.4 420.9 L1076.0 399.8 M1095.7 419.8 L1100.7 400.9 M1122.7 421.6 L1124.7 399.1 M1146.2 397.6 L1152.2 423.1 M1171.9 398.0 L1177.5 422.7 M1211.9 393.9 L1235.5 426.8 M1239.3 394.9 L1258.7 425.8 M1262.6 389.5 L1286.4 431.2 M1286.8 388.4 L1312.2 432.3 M1311.8 382.5 L1338.2 438.2 M1341.7 386.6 L1359.3 434.1 M1365.7 384.7 L1386.3 436.0 M1390.1 387.6 L1412.9 433.1 M1420.8 399.6 L1433.2 421.1 M1448.0 402.1 L1455.6 418.6 M1475.4 405.6 L1479.2 415.1 M1501.1 406.3 L1504.5 414.4 M1526.9 406.9 L1529.7 413.8 M948.2 440.2 L954.4 411.4 M974.2 439.1 L979.4 412.5 M999.5 437.6 L1005.1 414.0 M1024.2 436.3 L1031.4 415.3 M1050.0 435.8 L1056.6 415.8 M1076.6 434.7 L1081.0 416.9 M1100.8 437.0 L1107.8 414.6 M1129.3 436.3 L1130.3 415.3 M1151.7 412.5 L1158.9 439.1 M1173.2 410.3 L1188.4 441.3 M1186.2 408.1 L1223.0 443.5 M1213.7 405.0 L1245.9 446.6 M1242.3 407.0 L1269.1 444.6 M1271.3 407.9 L1291.1 443.7 M1292.7 403.4 L1319.3 448.2 M1320.2 402.1 L1342.8 449.5 M1342.9 397.9 L1371.1 453.7 M1370.9 401.6 L1394.1 450.0 M1398.2 403.5 L1417.8 448.1 M1426.1 413.0 L1440.9 438.6 M1454.0 417.2 L1463.4 434.4 M1482.2 422.2 L1486.2 429.4 M1507.4 421.7 L1512.0 429.9 M1533.1 421.8 L1537.3 429.8 M943.3 456.7 L947.3 425.5 M967.5 455.4 L974.1 426.8 M994.1 451.0 L998.5 431.2 M1020.4 451.1 L1023.2 431.2 M1045.3 450.5 L1049.3 431.7 M1070.8 451.9 L1074.8 430.4 M1095.9 452.4 L1100.7 429.8 M1122.2 430.5 L1125.4 451.7 M1144.7 429.7 L1153.9 452.6 M1165.6 426.9 L1184.0 455.4 M1170.9 421.0 L1211.1 461.3 M1195.0 419.3 L1238.0 462.9 M945.3 486.0 L949.3 457.8 M972.5 463.2 L973.1 480.6 M997.1 464.8 L999.5 479.0 M1021.8 466.1 L1025.8 477.7 M1047.0 467.2 L1051.6 476.6 M1072.0 466.2 L1077.6 477.6 M1095.2 465.9 L1105.4 477.9 M1134.0 462.5 L1153.0 481.3 M1153.8 459.0 L1179.4 484.8 M1180.3 457.2 L1205.7 486.5 M1203.1 457.4 L1232.9 486.3 M945.0 497.2 L947.6 508.1 M970.6 500.0 L973.0 505.3 M996.1 500.1 L998.5 505.2 M1021.1 499.3 L1024.5 506.0 M1046.9 499.8 L1049.7 505.5 M1071.7 499.0 L1075.9 506.4 M1088.6 496.5 L1098.2 508.8 M1114.0 497.0 L1122.4 508.4 M1136.9 495.2 L1148.1 510.1 M1158.3 492.6 L1179.3 512.8 M1183.6 495.1 L1205.0 510.2 M1209.7 497.9 L1229.9 507.4 M970.7 531.1 L972.5 535.7 M996.2 531.0 L998.0 535.9 M1021.2 530.1 L1024.0 536.7 M1046.2 529.6 L1050.0 537.3 M1067.5 529.5 L1072.1 537.4 M1092.7 529.3 L1097.9 537.5 M1117.1 530.0 L1121.3 536.9 M1142.4 529.3 L1147.0 537.6 M1164.3 526.7 L1176.1 540.2 M1186.0 527.9 L1205.4 539.0 M1021.1 559.5 L1024.5 568.9 M1045.6 559.9 L1049.8 568.5 M1069.3 559.5 L1074.3 568.9 M1094.1 560.3 L1098.7 568.1 M1120.3 561.2 L1123.5 567.2 M1145.5 561.2 L1149.3 567.2 M1168.3 558.5 L1177.5 569.9 M1190.7 560.3 L1206.1 568.1 M1068.6 591.4 L1073.0 598.5 M1094.3 590.9 L1098.3 599.0 M1119.9 592.0 L1123.7 598.0 M1145.2 591.3 L1149.4 598.6 M1167.3 590.0 L1178.3 599.9 M1190.6 591.1 L1206.0 598.9 M1044.2 621.7 L1048.2 629.8 M1070.3 623.1 L1073.1 628.4 M1095.4 623.0 L1099.0 628.4 M1120.9 622.3 L1124.5 629.1 M1145.3 621.9 L1151.1 629.5 M1168.7 621.7 L1178.7 629.8 M1193.2 622.3 L1205.2 629.2 M560.2 653.0 L563.8 660.0 M584.2 650.3 L590.8 662.7 M609.5 647.8 L616.5 665.2 M634.8 645.9 L642.2 667.1 M657.8 643.6 L670.2 669.4 M687.6 642.1 L691.4 670.9 M712.6 645.4 L717.4 667.7 M740.8 672.2 L740.2 640.8 M764.4 671.1 L767.6 642.0 M788.0 672.2 L795.0 640.8 M811.4 669.7 L822.6 643.3 M837.1 669.1 L847.9 643.9 M863.0 665.0 L873.0 648.0 M886.3 664.5 L897.7 648.5 M909.8 662.7 L919.2 650.3 M1014.4 662.2 L1015.8 650.8 M1038.5 651.6 L1042.7 661.4 M1064.1 653.2 L1068.1 659.8 M1090.0 653.7 L1093.2 659.3 M1115.4 653.7 L1118.8 659.4 M1139.8 652.6 L1145.4 660.4 M1164.7 653.1 L1171.5 659.9 M1188.8 652.9 L1198.4 660.1 M1214.0 652.9 L1224.2 660.2 M558.4 684.3 L562.6 690.3 M581.9 680.8 L590.1 693.8 M607.7 681.1 L615.3 693.5 M633.9 679.8 L640.1 694.8 M659.8 677.3 L665.2 697.3 M685.7 678.7 L690.3 695.9 M712.8 677.7 L714.2 696.9 M738.3 699.2 L739.7 675.4 M762.2 697.8 L766.8 676.8 M786.6 700.5 L793.4 674.1 M811.8 698.8 L819.2 675.7 M835.6 699.3 L846.4 675.3 M861.3 696.8 L871.7 677.8 M887.6 693.6 L896.4 681.0 M912.2 693.9 L922.8 680.6 M939.0 691.6 L947.0 683.0 M965.0 691.5 L972.0 683.1 M991.1 691.6 L996.9 683.0 M1018.8 693.3 L1020.2 681.2 M1043.2 682.8 L1046.8 691.8 M1068.3 683.5 L1072.7 691.0 M1093.8 683.8 L1098.2 690.8 M1119.5 684.3 L1123.5 690.3 M1144.6 683.4 L1149.4 691.1 M1169.6 683.3 L1175.4 691.2 M1194.6 684.3 L1201.4 690.2 M538.3 715.7 L541.7 720.4 M563.3 715.3 L567.7 720.8 M587.6 712.3 L594.4 723.8 M613.0 711.5 L620.0 724.6 M639.3 712.0 L644.7 724.1 M665.5 711.9 L669.5 724.2 M690.9 712.0 L695.1 724.1 M718.6 712.9 L718.4 723.2 M741.5 722.8 L746.5 713.3 M766.2 723.7 L772.8 712.4 M791.8 724.7 L798.2 711.4 M817.9 723.9 L823.1 712.2 M840.8 726.0 L851.2 710.1 M866.6 725.4 L876.4 710.7 M893.3 724.1 L900.7 712.0 M919.0 722.7 L926.0 713.4 M943.9 723.4 L952.1 712.7 M970.5 722.9 L976.5 713.2 M996.8 723.4 L1001.2 712.7 M1024.0 713.9 L1025.0 722.2 M1048.5 714.0 L1051.5 722.1 M1073.8 714.7 L1077.2 721.4 M1099.1 714.7 L1102.9 721.4 M1124.1 714.4 L1128.9 721.7 M1149.8 715.0 L1154.2 721.1 M1175.1 714.9 L1179.9 721.2 M1199.3 715.5 L1206.7 720.6 M559.5 745.3 L564.5 752.3 M585.7 745.4 L589.3 752.2 M610.4 744.3 L615.6 753.4 M636.3 743.5 L640.7 754.2 M661.9 743.9 L666.1 753.7 M687.0 744.2 L692.0 753.4 M712.6 743.8 L717.4 753.8 M739.2 754.0 L741.8 743.6 M763.2 754.8 L768.8 742.8 M788.6 752.9 L794.4 744.7 M814.7 752.2 L819.3 745.4 M839.6 753.0 L845.4 744.6 M865.2 752.6 L870.8 745.1 M890.6 752.1 L896.4 745.5 M915.8 753.2 L922.2 744.5 M941.8 753.4 L947.2 744.2 M968.3 752.7 L971.7 744.9 M994.3 752.7 L996.7 745.0 M1020.7 744.1 L1021.3 753.5 M1044.7 745.7 L1048.3 751.9 M1069.9 745.2 L1074.1 752.4 M1095.7 745.5 L1099.3 752.2 M1120.8 745.6 L1125.2 752.0 M1146.2 745.7 L1150.8 752.0 M1171.3 745.0 L1176.7 752.6 M1196.5 745.9 L1202.5 751.7 M639.1 776.8 L641.5 782.4 M664.0 774.1 L667.6 785.1 M689.4 775.3 L693.2 783.9 M715.5 774.5 L718.1 784.7 M740.2 783.4 L744.4 775.8 M765.5 782.6 L770.1 776.6 M790.4 783.6 L796.2 775.5 M816.3 783.3 L821.3 775.8 M841.1 783.2 L847.5 776.0 M867.1 782.8 L872.5 776.4 M892.0 783.8 L898.6 775.4 M918.4 783.3 L923.2 775.9 M944.7 783.9 L947.9 775.2 M970.5 784.0 L973.1 775.2 M996.2 783.4 L998.4 775.8 M1022.5 775.7 L1023.1 783.5 M1046.3 776.2 L1050.3 783.0 M1071.9 775.5 L1075.7 783.7 M1097.6 776.2 L1101.0 783.0 M1122.9 776.2 L1126.7 783.0 M1148.2 776.3 L1152.4 782.9 M1173.1 776.9 L1178.5 782.3 M1198.8 777.6 L1203.8 781.6 M664.5 806.7 L667.3 814.0 M738.1 814.0 L743.9 806.7 M764.4 813.1 L768.6 807.6 M789.4 814.1 L794.6 806.6 M814.4 815.0 L820.6 805.7 M839.6 814.3 L846.4 806.5 M865.9 814.4 L871.1 806.3 M891.7 813.7 L896.3 807.0 M917.3 814.8 L921.7 805.9 M943.6 814.1 L946.4 806.6 M970.1 814.1 L970.9 806.6 M996.0 806.1 L996.0 814.6 M1021.1 806.6 L1021.9 814.1 M1045.7 806.5 L1048.3 814.3 M1070.9 807.1 L1074.1 813.6 M1095.9 806.9 L1100.1 813.8 M1121.7 807.2 L1125.3 813.5 M1146.7 807.0 L1151.3 813.7 M1171.8 807.5 L1177.2 813.3 M1197.4 808.2 L1202.6 812.5 M759.6 837.7 L764.8 829.7 M785.1 838.1 L790.3 829.3 M810.2 838.5 L816.2 828.9 M836.1 838.0 L841.3 829.4 M861.5 838.1 L866.9 829.3 M887.3 837.4 L892.1 830.0 M913.1 838.1 L917.3 829.3 M938.8 837.7 L942.6 829.7 M966.1 837.5 L966.3 829.9 M991.1 830.0 L992.3 837.4 M1017.0 830.2 L1017.4 837.2 M1041.9 830.2 L1043.5 837.2 M1066.5 830.1 L1069.9 837.3 M1092.2 831.1 L1095.2 836.3 M1117.2 830.7 L1121.2 836.7 M1143.2 830.9 L1146.2 836.5 M1168.2 831.0 L1172.2 836.4 M1193.4 831.7 L1198.0 835.7 M657.7 396.0 L663.2 390.0 M689.6 346.4 L692.9 343.2 M687.3 411.3 L695.2 402.3 M719.6 348.2 L724.4 341.4 M718.5 379.8 L725.6 371.8 M718.4 411.8 L725.7 401.8 M751.4 315.7 L754.2 311.9 M750.2 348.2 L755.3 341.4 M749.6 379.7 L756.0 371.9 M749.1 412.6 L756.5 401.0 M781.9 346.9 L785.2 342.7 M780.5 381.0 L786.6 370.6 M779.3 412.5 L787.8 401.1 M812.6 347.1 L816.0 342.5 M810.6 381.9 L818.0 369.7 M810.1 412.5 L818.6 401.1 M844.4 341.3 L845.8 334.7 M844.2 374.3 L846.0 363.7 M842.5 408.1 L847.7 391.9 M875.4 366.7 L876.4 357.3 M873.4 402.2 L878.3 383.8 M902.1 425.1 L911.2 395.5 M655.7 641.5 L665.2 662.3 M657.7 673.4 L663.3 692.4 M689.2 642.5 L693.3 661.3 M689.7 675.9 L692.8 689.9 M720.4 640.9 L723.6 662.9 M721.1 674.2 L723.0 691.6 M753.0 663.9 L752.5 639.9 M752.1 692.3 L753.5 673.5 M750.9 717.8 L754.7 710.0 M750.9 748.8 L754.7 741.0 M750.6 778.9 L754.9 772.9 M750.5 809.6 L755.0 804.2 M780.4 663.5 L786.7 640.3 M781.1 693.3 L786.1 672.5 M780.8 719.0 L786.3 708.8 M781.2 748.3 L785.9 741.5 M781.6 779.0 L785.6 772.8 M781.4 810.1 L785.7 803.7 M810.1 663.2 L818.6 640.6 M811.0 692.4 L817.6 673.4 M811.8 719.1 L816.9 708.7 M812.2 747.9 L816.5 741.9 M812.0 779.7 L816.6 772.1 M812.3 809.9 L816.3 803.9 M840.8 660.4 L849.4 643.4 M840.3 692.1 L849.9 673.7 M841.7 719.9 L848.5 707.9 M842.6 778.7 L847.6 773.1 M872.2 658.2 L879.5 645.6 M872.2 688.8 L879.5 677.0 M872.3 719.6 L879.4 708.2 M873.6 748.3 L878.2 741.5 M873.6 778.5 L878.1 773.3 M874.1 809.7 L877.7 804.1 M903.3 728.3 L910.0 719.9 M904.4 758.3 L908.9 751.9 M904.1 789.3 L909.2 782.9 M904.8 819.9 L908.4 814.3 M935.7 772.2 L939.2 766.2 M936.2 803.2 L938.7 797.2 M967.2 797.4 L969.2 791.2 M968.2 828.8 L968.1 821.8 M997.7 772.6 L1000.2 765.8 M998.7 803.3 L999.2 797.1 M1029.4 690.8 L1030.0 697.8 M1028.5 721.7 L1030.9 728.9 M1028.4 753.0 L1031.1 759.6 M1029.6 814.9 L1029.9 821.7 M1059.0 616.2 L1062.0 621.8 M1058.8 647.2 L1062.2 652.8 M1059.1 677.7 L1061.9 684.3 M1058.7 708.6 L1062.2 715.4 M1059.0 740.1 L1061.9 745.9 M1059.1 771.1 L1061.8 776.9 M1058.9 802.0 L1062.1 808.0 M1089.1 539.5 L1093.4 546.5 M1089.5 565.0 L1093.0 571.8 M1089.4 596.3 L1093.1 602.5 M1090.3 628.4 L1092.3 632.4 M1089.8 689.8 L1092.8 695.0 M1089.6 720.2 L1092.9 726.6 M1089.6 751.1 L1092.9 757.7 M1090.0 782.5 L1092.6 788.3 M1089.8 813.5 L1092.7 819.3 M1117.2 349.9 L1126.8 333.7 M1119.2 381.1 L1124.9 364.5 M1118.4 469.3 L1125.7 477.7 M1117.6 487.6 L1126.5 498.2 M1119.0 511.6 L1125.1 521.8 M1120.6 540.4 L1123.5 545.6 M1120.7 571.5 L1123.4 576.5 M1120.3 602.3 L1123.8 607.7 M1120.8 634.0 L1123.2 638.0 M1120.9 664.8 L1123.2 669.2 M1120.2 695.6 L1123.9 700.4 M1119.9 725.9 L1124.2 732.1 M1120.3 757.4 L1123.7 762.6 M1120.4 788.1 L1123.6 793.9 M1120.5 819.5 L1123.6 824.5 M1150.1 320.4 L1155.5 313.6 M1146.9 356.4 L1158.7 339.6 M1144.1 459.4 L1161.5 476.6 M1145.6 477.7 L1160.0 493.3 M1148.6 512.3 L1157.0 523.3 M1151.1 546.2 L1154.5 551.4 M1151.2 577.4 L1154.4 582.2 M1150.4 608.0 L1155.2 613.6 M1150.5 638.6 L1155.1 645.0 M1150.7 670.1 L1154.9 675.5 M1150.7 701.1 L1154.9 706.5 M1150.8 732.0 L1154.8 737.6 M1150.4 762.9 L1155.2 768.7 M1150.8 794.0 L1154.8 799.6 M1181.1 294.4 L1186.1 289.6 M1180.7 326.5 L1186.5 319.5 M1179.8 360.3 L1187.4 347.7 M1182.6 373.7 L1184.5 396.3 M1179.0 405.8 L1188.1 426.2 M1172.9 463.2 L1194.2 484.4 M1174.6 484.7 L1192.6 501.1 M1176.5 518.9 L1190.6 528.9 M1179.2 550.7 L1188.0 559.1 M1178.6 582.6 L1188.6 589.2 M1178.9 613.6 L1188.2 620.2 M1179.7 644.6 L1187.4 651.2 M1181.2 676.4 L1186.0 681.4 M1181.6 707.3 L1185.5 712.5 M1181.7 738.7 L1185.5 743.1 M1181.2 769.5 L1186.0 774.3 M1181.4 800.9 L1185.7 804.9 M1210.1 267.5 L1218.6 266.1 M1210.7 299.1 L1218.0 296.5 M1209.6 325.6 L1219.1 332.0 M1209.7 354.3 L1219.0 365.3 M1207.0 380.9 L1221.7 400.7 M1204.8 402.2 L1223.9 426.6 M1206.0 494.2 L1222.6 503.4 M1206.6 526.7 L1222.1 532.9 M1206.8 556.7 L1221.9 564.9 M1208.6 589.6 L1220.0 594.0 M1209.5 620.3 L1219.2 625.3 M1211.1 682.4 L1217.6 687.2 M1211.3 713.9 L1217.4 717.7 M1211.5 744.3 L1217.2 749.3 M1212.7 776.3 L1216.0 779.3 M1212.2 807.2 L1216.5 810.4 M1224.0 263.0 L1231.2 263.6 M1224.1 293.9 L1231.1 294.7 M1223.7 322.8 L1231.5 327.8 M1223.0 351.3 L1232.2 361.3 M1220.4 378.0 L1234.8 401.4 M1213.2 428.2 L1242.0 462.6 M1216.4 453.0 L1238.8 474.6 M1218.7 490.6 L1236.5 499.0 M1217.8 521.6 L1237.4 530.0 M1220.8 553.6 L1234.4 560.0 M1220.9 585.0 L1234.3 590.6 M1222.5 616.5 L1232.7 621.1 M1223.5 647.3 L1231.7 652.3 M1225.0 678.8 L1230.2 682.8 M1224.8 710.0 L1230.4 713.6 M1224.8 740.4 L1230.4 745.2 M1225.5 772.2 L1229.7 775.4 M1225.8 803.1 L1229.4 806.5 M1242.0 288.5 L1248.2 291.5 M1241.0 318.2 L1249.2 323.8 M1240.3 346.4 L1249.9 357.6 M1235.4 367.4 L1254.9 398.6 M1236.2 397.0 L1254.0 423.6 M1273.3 287.5 L1278.4 292.7 M1271.4 315.1 L1280.3 327.1 M1267.9 347.9 L1283.9 376.1 M1267.0 372.5 L1284.8 399.9 M1303.6 292.5 L1309.7 301.5 M1301.7 331.7 L1311.6 344.3 M1299.0 347.4 L1314.3 376.6 M1296.2 367.5 L1317.1 404.9 M1296.1 392.1 L1317.2 427.9 M1336.1 263.6 L1338.7 268.4 M1333.8 291.5 L1341.1 302.5 M1333.2 307.8 L1341.6 320.2 M1332.2 329.8 L1342.6 346.2 M1330.2 350.7 L1344.7 373.3 M1328.0 366.7 L1346.9 405.3 M1327.9 393.0 L1347.0 441.0 M1365.6 261.1 L1370.7 270.9 M1364.7 290.8 L1371.6 303.2 M1364.2 322.1 L1372.2 333.9 M1362.7 350.5 L1373.7 367.5 M1360.4 373.7 L1375.9 406.3 M1396.8 286.4 L1401.1 293.8 M1396.4 316.1 L1401.5 326.1 M1392.1 370.7 L1405.8 395.5 M1389.5 397.0 L1408.5 431.2 M1028.4 566.7 L1031.6 575.7 M1047.1 552.9 L1050.9 560.8 M1065.7 538.2 L1070.3 546.9 M1084.2 523.8 L1089.8 532.6 M1102.3 509.0 L1109.7 518.8 M1120.1 493.1 L1129.9 506.1 M1135.1 474.2 L1152.9 496.4 M1153.2 460.6 L1172.8 481.3 M1164.6 452.4 L1183.4 473.0 M1170.7 438.4 L1199.3 470.3 M1178.3 428.5 L1213.7 463.6 M1189.3 421.5 L1224.7 454.0 M1202.2 411.9 L1233.8 447.1 M1215.5 406.0 L1242.5 436.4 M1226.8 395.4 L1253.2 430.4 M1241.8 389.8 L1260.2 419.5 M1252.1 378.9 L1271.9 413.8 M1261.6 366.4 L1284.4 409.7 M1271.8 360.0 L1296.2 399.5 M1283.3 348.0 L1306.7 395.0 M1296.0 347.7 L1316.0 378.6 M1319.1 339.0 L1330.9 358.7 M1338.5 324.6 L1349.5 344.5 M888.4 826 L880.6 842.5 M912.5 826 L907.0 842.5 M936.8 826 L933.5 842.5 M960.4 826 L959.4 842.5 M984.0 826 L985.0 842.5 M1007.8 826 L1011.0 842.5 M1032.3 826 L1037.8 842.5 M1056.6 826 L1064.2 842.5" fill="none" stroke="#000" stroke-opacity=".72" stroke-width=".6"/><path d="M517.0 226.0 L1542.5 226.0 L1542.5 841.5 L1440.5 841.5 L1440.5 431.0 L1235.0 431.0 L1235.0 841.5 L517.0 841.5 Z" fill="none" stroke="#000" stroke-width="2"/><rect x="620.4" y="431" width="307.6" height="205" fill="none" stroke="#000" stroke-width="2"/><g fill="none" stroke="#0a0a78" stroke-width="2.2" stroke-linejoin="miter"><path d="M619.3 841.6 H722.2 M1440.5 841.6 H1542.5"/><path d="M619.3 842 L606.7 859.3 H631.9 Z"/><path d="M619.3 890.5 V868" stroke-width="1.8"/><path d="M619.3 862.5 L617.0 874 H621.6 Z" fill="#0a0a78" stroke="none"/><path d="M670.7 842 L658.1 859.3 H683.3 Z"/><path d="M670.7 890.5 V868" stroke-width="1.8"/><path d="M670.7 862.5 L668.4 874 H673.0 Z" fill="#0a0a78" stroke="none"/><path d="M722.2 842 L709.6 859.3 H734.8 Z"/><path d="M722.2 890.5 V868" stroke-width="1.8"/><path d="M722.2 862.5 L719.9 874 H724.5 Z" fill="#0a0a78" stroke="none"/><path d="M1440.5 842 L1427.9 859 H1453.1 Z M1426.9 863.3 H1454.1"/><path d="M1440.5 899.8 V872" stroke-width="1.8"/><path d="M1440.5 866.8 L1438.2 878.5 H1442.8 Z" fill="#0a0a78" stroke="none"/><path d="M1491.6 842 L1479.0 859 H1504.2 Z M1478.0 863.3 H1505.2"/><path d="M1491.6 899.8 V872" stroke-width="1.8"/><path d="M1491.6 866.8 L1489.3 878.5 H1493.9 Z" fill="#0a0a78" stroke="none"/><path d="M1542.5 842 L1529.9 859 H1555.1 Z M1528.9 863.3 H1556.1"/><path d="M1542.5 899.8 V872" stroke-width="1.8"/><path d="M1542.5 866.8 L1540.2 878.5 H1544.8 Z" fill="#0a0a78" stroke="none"/></g><rect x="673.5" y="644" width="43" height="12.6" rx="2" fill="#fff"/><circle cx="674.3" cy="656.6" r="2.5" fill="#000"/><rect x="689" y="641.6" width="5.5" height="2" fill="#fb0606"/></g><rect x="507" y="216" width="1047" height="693" fill="none" stroke="#ff0000" stroke-width="4" shape-rendering="crispEdges"/></svg>
<span class="t" id="t97" style="top:645.00px;font-size:11px;color:#000;font-weight:700;left:674.80px;transform-origin:0 50%;transform:scaleX(0.9906);">297 mm</span>
<div style="left:0px;top:1006px;width:1564px;height:1px;background:#000;"></div>
</div>
</body></html>
